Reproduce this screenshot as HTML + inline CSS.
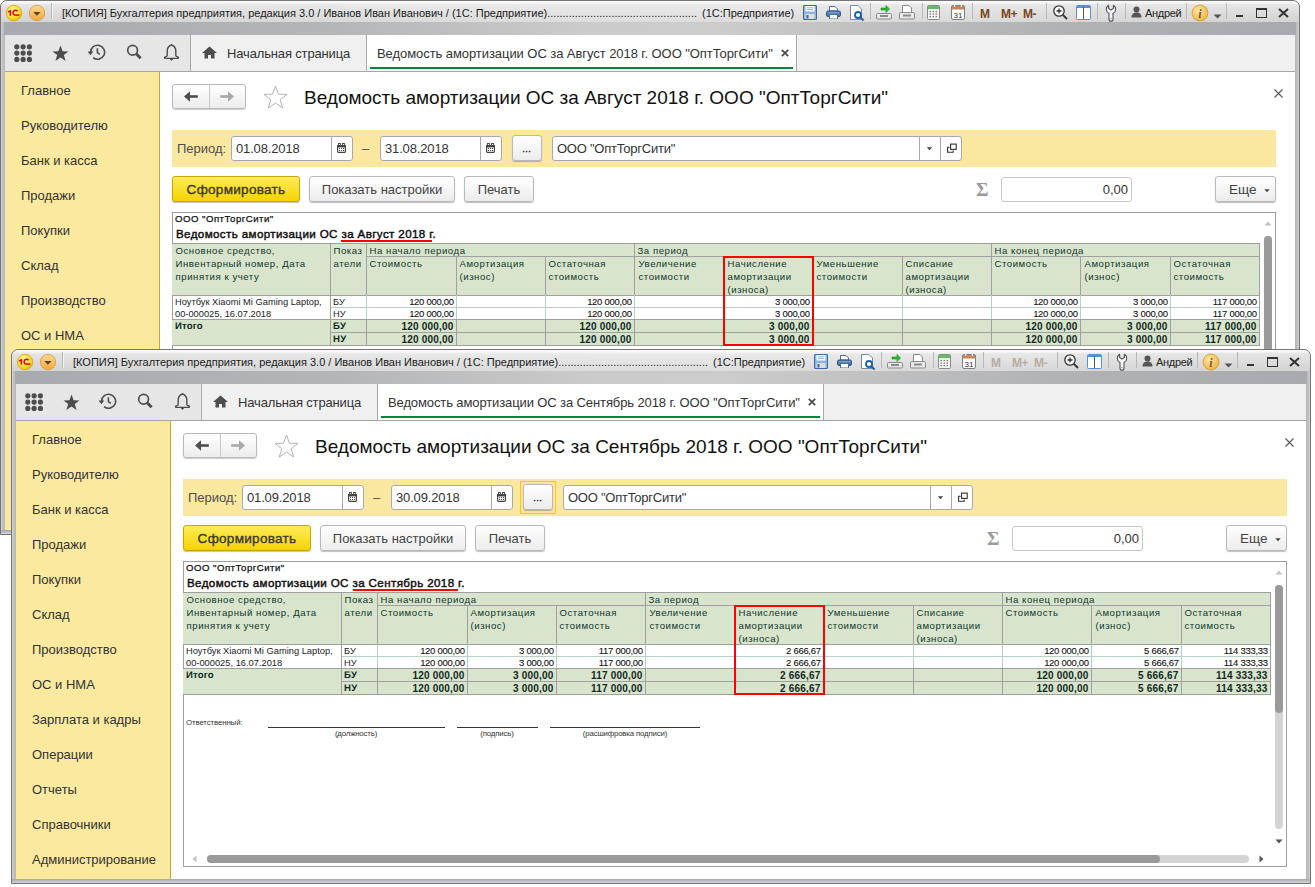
<!DOCTYPE html>
<html><head><meta charset="utf-8"><title>1C</title>
<style>
html,body{margin:0;padding:0;background:#fff;}
body{width:1315px;height:887px;overflow:hidden;position:relative;font-family:"Liberation Sans", sans-serif;}
div{font-family:"Liberation Sans", sans-serif;}
</style></head><body>
<div style="position:absolute;left:0px;top:0px;width:1300px;height:535px;overflow:hidden"><div style="position:absolute;left:0px;top:0px;width:1300px;height:535px;background:#b8b9bc;border:1px solid #767676;box-sizing:border-box;border-radius:7px 7px 0 0"></div><div style="position:absolute;left:1px;top:1px;width:1298px;height:21px;border-radius:6px 6px 0 0;background:linear-gradient(#fbfbfb 0px,#f4f4f4 2px,#e4e4e4 4px,#d3d3d3 21px)"></div><div style="position:absolute;left:1px;top:1px;width:1298px;height:21px;border-radius:6px 6px 0 0;background:linear-gradient(90deg,rgba(255,255,255,0) 0%,rgba(255,255,255,0.22) 45%,rgba(255,255,255,0.22) 55%,rgba(255,255,255,0) 100%)"></div><div style="position:absolute;left:1px;top:22px;width:1298px;height:13px;background:linear-gradient(90deg,#a9aaad 0%,#b4b5b7 25%,#cbcbcb 45%,#cccccc 55%,#b2b3b5 80%,#a9aaad 100%)"></div><div style="position:absolute;left:1px;top:22px;width:3px;height:512px;background:linear-gradient(90deg,#cfd0d2,#b8b9bc)"></div><div style="position:absolute;left:1296px;top:22px;width:3px;height:512px;background:linear-gradient(90deg,#b8b9bc,#cdced0)"></div><div style="position:absolute;left:1px;top:530px;width:1298px;height:4px;background:linear-gradient(#a6a7ac,#c2c3c6 60%,#d4d5d7)"></div><div style="position:absolute;left:5px;top:35px;width:1290px;height:495px;background:#fff"></div><svg style="position:absolute;left:5px;top:3px" width="19" height="19" viewBox="0 0 19 19"><defs><radialGradient id="g1ca" cx="40%" cy="35%" r="70%"><stop offset="0" stop-color="#fff7a0"/><stop offset="0.6" stop-color="#ffe23a"/><stop offset="1" stop-color="#f0b800"/></radialGradient></defs><circle cx="9" cy="10" r="7.7" fill="url(#g1ca)" stroke="#d8a300" stroke-width="0.8"/><path d="M2.8 8.4 L5.2 6.9 H6.1 V12.8 H4.6 V8.9 L2.8 9.8 Z" fill="#e80000"/><path d="M12.5 8.2 A2.5 2.5 0 1 0 9.6 12.1" fill="none" stroke="#e80000" stroke-width="1.5"/><path d="M9.4 12.1 H14.4" stroke="#e80000" stroke-width="1.5"/></svg><svg style="position:absolute;left:28px;top:3px" width="19" height="19" viewBox="0 0 19 19"><defs><linearGradient id="gdda" x1="0" y1="0" x2="0" y2="1"><stop offset="0" stop-color="#ffd890"/><stop offset="1" stop-color="#f6a83a"/></linearGradient></defs><circle cx="9" cy="10" r="7.7" fill="url(#gdda)" stroke="#c99a4a" stroke-width="0.8"/><path d="M5.2 9.1 L12.6 9.1 L8.9 12.8 Z" fill="#5a4322"/></svg><div style="position:absolute;left:51px;top:3px;width:1px;height:16px;background:#b4b4b4"></div><div style="position:absolute;left:52px;top:3px;width:1px;height:16px;background:#f4f4f4"></div><div style="position:absolute;left:62px;top:5px;white-space:nowrap;font-size:11px;line-height:16px;color:#1a1a1a;font-weight:normal;">[КОПИЯ] Бухгалтерия предприятия, редакция 3.0 / Иванов Иван Иванович / (1С: Предприятие).................................................</div><div style="position:absolute;left:702px;top:5px;white-space:nowrap;font-size:11px;line-height:16px;color:#1a1a1a;font-weight:normal;">(1С:Предприятие)</div><svg style="position:absolute;left:803px;top:5px" width="14" height="15" viewBox="0 0 14 15"><rect x="0.5" y="0.5" width="13" height="14" rx="0.5" fill="#8fb4e4" stroke="#3f6aa8"/><rect x="2.5" y="1" width="9" height="5.5" fill="#fff"/><path d="M4 2.8 H10 M4 4.6 H10" stroke="#7a9cc8" stroke-width="0.8"/><rect x="2.5" y="9" width="9" height="5" fill="#d8e0d8"/><rect x="3.5" y="10" width="2" height="3.5" fill="#3f6aa8"/></svg><svg style="position:absolute;left:826px;top:6px" width="15" height="13" viewBox="0 0 15 13"><path d="M3.5 0.5 H9 L11.5 3 V5 H3.5 Z" fill="#fff" stroke="#4a6a90"/><rect x="0.5" y="5" width="14" height="5.5" rx="1.5" fill="#4f7bb0" stroke="#34588a"/><path d="M2 6.8 H13" stroke="#9ab8dc" stroke-width="0.8"/><rect x="3.5" y="8.5" width="8" height="4.5" fill="#fff" stroke="#4a6a90"/></svg><svg style="position:absolute;left:850px;top:5px" width="15" height="16" viewBox="0 0 15 16"><path d="M0.5 0.5 H8 L11.5 4 V14.5 H0.5 Z" fill="#fff" stroke="#7a8aa0"/><circle cx="8" cy="10" r="3" fill="none" stroke="#1b5fa8" stroke-width="1.8"/><path d="M10 12 L13.5 15.5" stroke="#1b5fa8" stroke-width="2"/></svg><div style="position:absolute;left:870px;top:3px;width:1px;height:16px;background:#b8b8b8"></div><svg style="position:absolute;left:876px;top:5px" width="16" height="15" viewBox="0 0 16 15"><path d="M5 3 H10 V0.5 L13.5 4 L10 7.5 V5 H5 Z" fill="#2db82d" stroke="#1a8a1a" stroke-width="0.6"/><rect x="0.5" y="8.5" width="15" height="5.5" rx="1" fill="#e8e8e8" stroke="#8a8a8a"/><rect x="4" y="10" width="8" height="2" fill="#8a8a8a"/></svg><svg style="position:absolute;left:899px;top:5px" width="16" height="15" viewBox="0 0 16 15"><path d="M3.5 0.5 H10 L12.5 3 V8 H3.5 Z" fill="#fff" stroke="#8a8a8a"/><rect x="0.5" y="7.5" width="15" height="6.5" rx="1" fill="#e8e8e8" stroke="#8a8a8a"/><rect x="4" y="9.5" width="8" height="2" fill="#8a8a8a"/></svg><div style="position:absolute;left:922px;top:3px;width:1px;height:16px;background:#b8b8b8"></div><svg style="position:absolute;left:927px;top:5px" width="13" height="15" viewBox="0 0 13 15"><rect x="0.5" y="0.5" width="12" height="14" rx="1" fill="#f4f4f4" stroke="#8a8a8a"/><rect x="1" y="1" width="11" height="3" fill="#5fbf5f"/><g fill="#7a7a7a"><rect x="2.5" y="6" width="1.5" height="1.2"/><rect x="5.5" y="6" width="1.5" height="1.2"/><rect x="8.5" y="6" width="1.5" height="1.2"/><rect x="2.5" y="8.5" width="1.5" height="1.2"/><rect x="5.5" y="8.5" width="1.5" height="1.2"/><rect x="8.5" y="8.5" width="1.5" height="1.2" fill="#d33"/><rect x="2.5" y="11" width="1.5" height="1.2"/><rect x="5.5" y="11" width="1.5" height="1.2"/><rect x="8.5" y="11" width="1.5" height="1.2"/></g></svg><svg style="position:absolute;left:951px;top:4px" width="14" height="16" viewBox="0 0 14 16"><rect x="0.5" y="1.5" width="13" height="14" rx="1.5" fill="#fbfbfb" stroke="#7a8088"/><rect x="1" y="2" width="12" height="3.5" fill="#c8865a"/><rect x="3" y="1" width="1.2" height="2" fill="#fff"/><rect x="9.8" y="1" width="1.2" height="2" fill="#fff"/><text x="7" y="13.8" font-family="Liberation Sans" font-size="8" fill="#333" text-anchor="middle">31</text></svg><div style="position:absolute;left:972px;top:3px;width:1px;height:16px;background:#b8b8b8"></div><div style="position:absolute;left:980px;top:6px;white-space:nowrap;font-size:12px;line-height:16px;color:#7a4518;font-weight:bold;letter-spacing:0">M</div><div style="position:absolute;left:1001px;top:6px;white-space:nowrap;font-size:12px;line-height:16px;color:#7a4518;font-weight:bold;letter-spacing:-0.5px">M+</div><div style="position:absolute;left:1023px;top:6px;white-space:nowrap;font-size:12px;line-height:16px;color:#7a4518;font-weight:bold;letter-spacing:-0.5px">M-</div><div style="position:absolute;left:1046px;top:3px;width:1px;height:16px;background:#b8b8b8"></div><svg style="position:absolute;left:1053px;top:5px" width="15" height="15" viewBox="0 0 15 15"><circle cx="6" cy="6" r="5.2" fill="#fff" stroke="#333" stroke-width="1.3"/><path d="M3.5 6 H8.5 M6 3.5 V8.5" stroke="#333" stroke-width="1.3"/><path d="M10 10 L14 14" stroke="#333" stroke-width="1.8"/></svg><svg style="position:absolute;left:1076px;top:5px" width="15" height="15" viewBox="0 0 15 15"><rect x="0.5" y="0.5" width="14" height="14" rx="1" fill="#fff" stroke="#5b8fd0"/><rect x="1" y="1" width="13" height="2" fill="#5b8fd0"/><path d="M7.5 2 V14" stroke="#555" stroke-width="1"/></svg><div style="position:absolute;left:1097px;top:3px;width:1px;height:16px;background:#b8b8b8"></div><svg style="position:absolute;left:1105px;top:4px" width="12" height="18" viewBox="0 0 12 18"><path d="M3.6 1.2 V4.6 L6 6 L8.4 4.6 V1.2 A4.8 4.8 0 0 1 8 9.6 V15.2 A2 2 0 0 1 4 15.2 V9.6 A4.8 4.8 0 0 1 3.6 1.2 Z" fill="#f6f6f6" stroke="#50545a" stroke-width="1.1" stroke-linejoin="round"/><circle cx="6" cy="14.6" r="0.9" fill="#b0b0b0"/></svg><div style="position:absolute;left:1125px;top:3px;width:1px;height:16px;background:#b8b8b8"></div><svg style="position:absolute;left:1131px;top:6px" width="11" height="12" viewBox="0 0 11 12"><circle cx="5.5" cy="3.5" r="3" fill="#555"/><path d="M0.5 11.5 Q0.5 6.5 5.5 6.5 Q10.5 6.5 10.5 11.5 Z" fill="#555"/></svg><div style="position:absolute;left:1145px;top:6px;white-space:nowrap;font-size:11px;line-height:14px;color:#222;font-weight:normal;letter-spacing:-0.3px">Андрей</div><div style="position:absolute;left:1186px;top:3px;width:1px;height:16px;background:#b8b8b8"></div><svg style="position:absolute;left:1191px;top:4px" width="18" height="18" viewBox="0 0 18 18"><defs><radialGradient id="gina" cx="40%" cy="35%" r="70%"><stop offset="0" stop-color="#ffe6a0"/><stop offset="1" stop-color="#f0b040"/></radialGradient></defs><circle cx="9" cy="9" r="8" fill="url(#gina)" stroke="#d09a30" stroke-width="0.8"/><text x="9" y="13.5" font-family="Liberation Serif" font-style="italic" font-weight="bold" font-size="12" fill="#6a5a40" text-anchor="middle">i</text></svg><svg style="position:absolute;left:1213px;top:14px" width="9" height="5" viewBox="0 0 9 5"><path d="M0.5 0.5 H8.5 L4.5 4.5 Z" fill="#555"/></svg><div style="position:absolute;left:1226px;top:3px;width:1px;height:16px;background:#b8b8b8"></div><div style="position:absolute;left:1236px;top:15px;width:7px;height:2px;background:#333"></div><div style="position:absolute;left:1256px;top:8px;width:11px;height:10px;border:1.5px solid #333;box-sizing:border-box;border-top-width:2px"></div><svg style="position:absolute;left:1278px;top:8px" width="11" height="10" viewBox="0 0 11 10"><path d="M1 1 L10 9 M10 1 L1 9" stroke="#333" stroke-width="2"/></svg><div style="position:absolute;left:5px;top:35px;width:185px;height:36px;background:#e6e6e6"></div><div style="position:absolute;left:190px;top:35px;width:1px;height:36px;background:#a8a8a8"></div><div style="position:absolute;left:191px;top:35px;width:175px;height:36px;background:#f0f0f0"></div><svg style="position:absolute;left:14px;top:44px" width="18" height="18" viewBox="0 0 18 18"><circle cx="2.8" cy="2.8" r="2.6" fill="#4d4d4d"/><circle cx="9.1" cy="2.8" r="2.6" fill="#4d4d4d"/><circle cx="15.4" cy="2.8" r="2.6" fill="#4d4d4d"/><circle cx="2.8" cy="9.1" r="2.6" fill="#4d4d4d"/><circle cx="9.1" cy="9.1" r="2.6" fill="#4d4d4d"/><circle cx="15.4" cy="9.1" r="2.6" fill="#4d4d4d"/><circle cx="2.8" cy="15.4" r="2.6" fill="#4d4d4d"/><circle cx="9.1" cy="15.4" r="2.6" fill="#4d4d4d"/><circle cx="15.4" cy="15.4" r="2.6" fill="#4d4d4d"/></svg><svg style="position:absolute;left:52px;top:45px" width="17" height="17" viewBox="0 0 17 17"><path d="M8.5 0.5 L10.6 6.2 L16.5 6.4 L11.8 10 L13.6 16 L8.5 12.5 L3.4 16 L5.2 10 L0.5 6.4 L6.4 6.2 Z" fill="#4d4d4d"/></svg><svg style="position:absolute;left:87px;top:44px" width="19" height="17" viewBox="0 0 19 17"><path d="M3.6 8.2 A7 7 0 1 1 6.1 13.6" fill="none" stroke="#4d4d4d" stroke-width="1.6"/><path d="M0.6 7.4 L6.4 7.4 L3.4 11.2 Z" fill="#4d4d4d"/><path d="M10.4 4.2 V8.6 L12.8 10.4" fill="none" stroke="#4d4d4d" stroke-width="1.6"/></svg><svg style="position:absolute;left:126px;top:44px" width="17" height="17" viewBox="0 0 17 17"><circle cx="6.6" cy="6.2" r="4.9" fill="none" stroke="#4d4d4d" stroke-width="1.7"/><path d="M10.2 9.8 L14.6 14.2" stroke="#4d4d4d" stroke-width="3"/></svg><svg style="position:absolute;left:163px;top:44px" width="17" height="18" viewBox="0 0 17 18"><path d="M8.5 1 Q12.8 2.5 12.8 7 V11.5 Q12.8 12.5 15 13 Q16 14 14.8 14.4 H2.2 Q1 14 2 13 Q4.2 12.5 4.2 11.5 V7 Q4.2 2.5 8.5 1 Z" fill="none" stroke="#4d4d4d" stroke-width="1.4" stroke-linejoin="round"/><path d="M6.5 14.8 L8.5 17 L10.5 14.8 Z" fill="#4d4d4d"/><path d="M7.2 1.6 L8.5 0 L9.8 1.6 Z" fill="#4d4d4d"/></svg><svg style="position:absolute;left:202px;top:46px" width="15" height="13" viewBox="0 0 15 13"><path d="M7.5 0.5 L15 7 H12.5 V12.5 H9 V9 H6 V12.5 H2.5 V7 H0 Z" fill="#4d4d4d"/></svg><div style="position:absolute;left:227px;top:45px;white-space:nowrap;font-size:13px;line-height:17px;color:#333;font-weight:normal;letter-spacing:-0.15px">Начальная страница</div><div style="position:absolute;left:366px;top:35px;width:1px;height:36px;background:#a8a8a8"></div><div style="position:absolute;left:367px;top:35px;width:429px;height:36px;background:#fff"></div><div style="position:absolute;left:377px;top:45px;white-space:nowrap;font-size:13px;line-height:17px;color:#333;font-weight:normal;letter-spacing:-0.065px">Ведомость амортизации ОС за Август 2018 г. ООО "ОптТоргСити"</div><svg style="position:absolute;left:781px;top:49px" width="8" height="8" viewBox="0 0 8 8"><path d="M0.8 0.8 L7.2 7.2 M7.2 0.8 L0.8 7.2" stroke="#4a4a4a" stroke-width="1.7"/></svg><div style="position:absolute;left:370px;top:67px;width:423px;height:2px;background:#00893a"></div><div style="position:absolute;left:796px;top:35px;width:1px;height:36px;background:#a8a8a8"></div><div style="position:absolute;left:797px;top:35px;width:498px;height:36px;background:#f0f0f0"></div><div style="position:absolute;left:5px;top:71px;width:1290px;height:1px;background:#a6a6a6"></div><div style="position:absolute;left:5px;top:72px;width:154px;height:458px;background:#fbe9a0"></div><div style="position:absolute;left:159px;top:72px;width:1px;height:458px;background:#c8aa30"></div><div style="position:absolute;left:21px;top:82px;white-space:nowrap;font-size:13px;line-height:17px;color:#333;font-weight:normal;">Главное</div><div style="position:absolute;left:21px;top:117px;white-space:nowrap;font-size:13px;line-height:17px;color:#333;font-weight:normal;">Руководителю</div><div style="position:absolute;left:21px;top:152px;white-space:nowrap;font-size:13px;line-height:17px;color:#333;font-weight:normal;">Банк и касса</div><div style="position:absolute;left:21px;top:187px;white-space:nowrap;font-size:13px;line-height:17px;color:#333;font-weight:normal;">Продажи</div><div style="position:absolute;left:21px;top:222px;white-space:nowrap;font-size:13px;line-height:17px;color:#333;font-weight:normal;">Покупки</div><div style="position:absolute;left:21px;top:257px;white-space:nowrap;font-size:13px;line-height:17px;color:#333;font-weight:normal;">Склад</div><div style="position:absolute;left:21px;top:292px;white-space:nowrap;font-size:13px;line-height:17px;color:#333;font-weight:normal;">Производство</div><div style="position:absolute;left:21px;top:327px;white-space:nowrap;font-size:13px;line-height:17px;color:#333;font-weight:normal;">ОС и НМА</div><div style="position:absolute;left:21px;top:362px;white-space:nowrap;font-size:13px;line-height:17px;color:#333;font-weight:normal;">Зарплата и кадры</div><div style="position:absolute;left:21px;top:397px;white-space:nowrap;font-size:13px;line-height:17px;color:#333;font-weight:normal;">Операции</div><div style="position:absolute;left:21px;top:432px;white-space:nowrap;font-size:13px;line-height:17px;color:#333;font-weight:normal;">Отчеты</div><div style="position:absolute;left:21px;top:467px;white-space:nowrap;font-size:13px;line-height:17px;color:#333;font-weight:normal;">Справочники</div><div style="position:absolute;left:21px;top:502px;white-space:nowrap;font-size:13px;line-height:17px;color:#333;font-weight:normal;">Администрирование</div><div style="position:absolute;left:172px;top:84px;width:74px;height:25px;background:linear-gradient(#fff,#ececec);border:1px solid #b9b9b9;border-radius:3px;box-sizing:border-box;box-shadow:0 1px 1px rgba(0,0,0,0.2)"></div><div style="position:absolute;left:209px;top:85px;width:1px;height:23px;background:#c8c8c8"></div><svg style="position:absolute;left:183px;top:91px" width="16" height="11" viewBox="0 0 16 11"><path d="M1 5.5 L7 0.3 V10.7 Z" fill="#4d4d4d"/><rect x="6" y="4.2" width="8.8" height="2.6" fill="#4d4d4d"/></svg><svg style="position:absolute;left:219px;top:91px" width="16" height="11" viewBox="0 0 16 11"><path d="M15 5.5 L9 0.3 V10.7 Z" fill="#a8a8a8"/><rect x="1.2" y="4.2" width="8.8" height="2.6" fill="#a8a8a8"/></svg><svg style="position:absolute;left:263px;top:85px" width="25" height="24" viewBox="0 0 25 24"><path d="M12.5 1 L15.4 9.2 L24 9.4 L17.2 14.7 L19.7 23 L12.5 18.1 L5.3 23 L7.8 14.7 L1 9.4 L9.6 9.2 Z" fill="none" stroke="#b4b4b4" stroke-width="1"/></svg><div style="position:absolute;left:304px;top:86px;white-space:nowrap;font-size:19px;line-height:23px;color:#111;font-weight:normal;">Ведомость амортизации ОС за Август 2018 г. ООО "ОптТоргСити"</div><svg style="position:absolute;left:1274px;top:89px" width="9" height="9" viewBox="0 0 9 9"><path d="M0.5 0.5 L8.5 8.5 M8.5 0.5 L0.5 8.5" stroke="#555" stroke-width="1.1"/></svg><div style="position:absolute;left:172px;top:130px;width:1104px;height:37px;background:#fbe8a0"></div><div style="position:absolute;left:177px;top:140px;white-space:nowrap;font-size:13px;line-height:17px;color:#4d4d4d;font-weight:normal;">Период:</div><div style="position:absolute;left:231px;top:136px;width:122px;height:25px;background:#fff;border:1px solid #a9a9a9;border-radius:3px;box-sizing:border-box;"></div><div style="position:absolute;left:331px;top:137px;width:1px;height:23px;background:#a9a9a9"></div><div style="position:absolute;left:236px;top:140px;white-space:nowrap;font-size:13px;line-height:17px;color:#333;font-weight:normal;letter-spacing:-0.15px">01.08.2018</div><svg style="position:absolute;left:337px;top:143px" width="9" height="10" viewBox="0 0 9 10"><rect x="0.6" y="2.6" width="7.8" height="6.8" rx="0.8" fill="#fff" stroke="#444" stroke-width="1.2"/><rect x="0" y="2" width="9" height="2.4" fill="#444"/><rect x="1.5" y="0.5" width="2" height="2" fill="#fff" stroke="#444" stroke-width="0.9"/><rect x="5.5" y="0.5" width="2" height="2" fill="#fff" stroke="#444" stroke-width="0.9"/><rect x="2" y="5" width="1" height="1" fill="#444"/><rect x="4" y="5" width="1" height="1" fill="#444"/><rect x="6" y="5" width="1" height="1" fill="#444"/><rect x="2" y="7" width="1" height="1" fill="#444"/><rect x="4" y="7" width="1" height="1" fill="#444"/><rect x="6" y="7" width="1" height="1" fill="#444"/></svg><div style="position:absolute;left:380px;top:136px;width:122px;height:25px;background:#fff;border:1px solid #a9a9a9;border-radius:3px;box-sizing:border-box;"></div><div style="position:absolute;left:480px;top:137px;width:1px;height:23px;background:#a9a9a9"></div><div style="position:absolute;left:385px;top:140px;white-space:nowrap;font-size:13px;line-height:17px;color:#333;font-weight:normal;letter-spacing:-0.15px">31.08.2018</div><svg style="position:absolute;left:486px;top:143px" width="9" height="10" viewBox="0 0 9 10"><rect x="0.6" y="2.6" width="7.8" height="6.8" rx="0.8" fill="#fff" stroke="#444" stroke-width="1.2"/><rect x="0" y="2" width="9" height="2.4" fill="#444"/><rect x="1.5" y="0.5" width="2" height="2" fill="#fff" stroke="#444" stroke-width="0.9"/><rect x="5.5" y="0.5" width="2" height="2" fill="#fff" stroke="#444" stroke-width="0.9"/><rect x="2" y="5" width="1" height="1" fill="#444"/><rect x="4" y="5" width="1" height="1" fill="#444"/><rect x="6" y="5" width="1" height="1" fill="#444"/><rect x="2" y="7" width="1" height="1" fill="#444"/><rect x="4" y="7" width="1" height="1" fill="#444"/><rect x="6" y="7" width="1" height="1" fill="#444"/></svg><div style="position:absolute;left:362px;top:140px;white-space:nowrap;font-size:13px;line-height:17px;color:#555;font-weight:normal;">–</div><div style="position:absolute;left:512px;top:135px;width:30px;height:26px;background:linear-gradient(#ffffff,#ececec);border:1px solid #b9b9b9;border-radius:3px;box-sizing:border-box;box-shadow:0 1px 1px rgba(0,0,0,0.25);text-align:center;font-size:13px;line-height:25px;color:#333;font-weight:normal;white-space:nowrap;"></div><svg style="position:absolute;left:521px;top:149px" width="12" height="5" viewBox="0 0 12 5"><circle cx="2.6" cy="2.5" r="0.85" fill="#333"/><circle cx="5.6" cy="2.5" r="0.85" fill="#333"/><circle cx="8.6" cy="2.5" r="0.85" fill="#333"/></svg><div style="position:absolute;left:552px;top:136px;width:410px;height:25px;background:#fff;border:1px solid #a9a9a9;border-radius:3px;box-sizing:border-box;"></div><div style="position:absolute;left:557px;top:140px;white-space:nowrap;font-size:13px;line-height:17px;color:#333;font-weight:normal;letter-spacing:-0.25px">ООО "ОптТоргСити"</div><div style="position:absolute;left:919px;top:137px;width:1px;height:23px;background:#a9a9a9"></div><div style="position:absolute;left:940px;top:137px;width:1px;height:23px;background:#a9a9a9"></div><svg style="position:absolute;left:926px;top:147px" width="7" height="4" viewBox="0 0 7 4"><path d="M0.8 0.3 H6.2 L3.5 3.2 Z" fill="#444"/></svg><svg style="position:absolute;left:947px;top:143px" width="11" height="10" viewBox="0 0 11 10"><rect x="3.6" y="1.1" width="5.6" height="5.3" fill="none" stroke="#333" stroke-width="1.1"/><path d="M2.6 4.2 H0.6 V9.2 H6.2 V7.4" fill="none" stroke="#333" stroke-width="1.1"/></svg><div style="position:absolute;left:172px;top:176px;width:128px;height:26px;background:linear-gradient(#ffec5a,#f6d300);border:1px solid #c8a800;border-radius:3px;box-sizing:border-box;box-shadow:0 1px 1px rgba(0,0,0,0.25);text-align:center;font-size:13.5px;line-height:25px;color:#3c3a30;font-weight:normal;white-space:nowrap;letter-spacing:0.3px;-webkit-text-stroke:0.4px #3c3a30">Сформировать</div><div style="position:absolute;left:309px;top:176px;width:146px;height:26px;background:linear-gradient(#ffffff,#ececec);border:1px solid #b9b9b9;border-radius:3px;box-sizing:border-box;box-shadow:0 1px 1px rgba(0,0,0,0.25);text-align:center;font-size:13px;line-height:25px;color:#333;font-weight:normal;white-space:nowrap;color:#444">Показать настройки</div><div style="position:absolute;left:464px;top:176px;width:70px;height:26px;background:linear-gradient(#ffffff,#ececec);border:1px solid #b9b9b9;border-radius:3px;box-sizing:border-box;box-shadow:0 1px 1px rgba(0,0,0,0.25);text-align:center;font-size:13px;line-height:25px;color:#333;font-weight:normal;white-space:nowrap;color:#444">Печать</div><div style="position:absolute;left:976px;top:180px;white-space:nowrap;font-size:19px;line-height:20px;color:#9a9a9a;font-weight:bold;font-family:'Liberation Serif',serif">Σ</div><div style="position:absolute;left:1001px;top:177px;width:131px;height:25px;background:#fff;border:1px solid #a9a9a9;border-radius:3px;box-sizing:border-box;border-color:#c8c8c8"></div><div style="position:absolute;left:828px;width:300px;top:181px;text-align:right;white-space:nowrap;font-size:13px;line-height:17px;color:#333;font-weight:normal;">0,00</div><div style="position:absolute;left:1215px;top:176px;width:61px;height:26px;background:linear-gradient(#ffffff,#ececec);border:1px solid #b9b9b9;border-radius:3px;box-sizing:border-box;box-shadow:0 1px 1px rgba(0,0,0,0.25);text-align:center;font-size:13px;line-height:25px;color:#333;font-weight:normal;white-space:nowrap;text-align:left;padding-left:13px;color:#444;font-size:13.5px">Еще</div><svg style="position:absolute;left:1264px;top:189px" width="6" height="4" viewBox="0 0 6 4"><path d="M0.3 0.2 H5.7 L3 3.2 Z" fill="#444"/></svg><div style="position:absolute;left:172px;top:212px;width:1104px;height:306px;background:#fff;border:1px solid #a0a0a0;box-sizing:border-box"></div><div style="position:absolute;left:175px;top:212.5px;white-space:nowrap;font-size:9.6px;line-height:12.5px;color:#111;font-weight:normal;letter-spacing:0.5px;-webkit-text-stroke:0.25px #111">ООО "ОптТоргСити"</div><div style="position:absolute;left:176px;top:226px;white-space:nowrap;font-size:11.6px;line-height:15px;color:#111;font-weight:normal;letter-spacing:0.38px;-webkit-text-stroke:0.45px #111">Ведомость амортизации ОС за Август 2018 г.</div><div style="position:absolute;left:341px;top:240px;width:91px;height:2px;background:#ff0000"></div><div style="position:absolute;left:172px;top:243px;width:1087px;height:52px;background:#d9e4cc"></div><div style="position:absolute;left:172px;top:319px;width:1087px;height:26px;background:#d9e4cc"></div><div style="position:absolute;left:172px;top:243px;width:1088px;height:1px;background:#a0a0a0"></div><div style="position:absolute;left:366px;top:256px;width:893px;height:1px;background:#a0a0a0"></div><div style="position:absolute;left:172px;top:295px;width:1088px;height:1px;background:#a0a0a0"></div><div style="position:absolute;left:330px;top:307px;width:929px;height:1px;background:#b7d1c6"></div><div style="position:absolute;left:172px;top:319px;width:1088px;height:1px;background:#a0a0a0"></div><div style="position:absolute;left:330px;top:332px;width:929px;height:1px;background:#a0a0a0"></div><div style="position:absolute;left:172px;top:345px;width:1088px;height:1px;background:#a0a0a0"></div><div style="position:absolute;left:330px;top:243px;width:1px;height:52px;background:#a0a0a0"></div><div style="position:absolute;left:330px;top:295px;width:1px;height:24px;background:#a0a0a0"></div><div style="position:absolute;left:330px;top:319px;width:1px;height:26px;background:#a0a0a0"></div><div style="position:absolute;left:366px;top:243px;width:1px;height:52px;background:#a0a0a0"></div><div style="position:absolute;left:366px;top:295px;width:1px;height:24px;background:#b7d1c6"></div><div style="position:absolute;left:366px;top:319px;width:1px;height:26px;background:#a0a0a0"></div><div style="position:absolute;left:456px;top:256px;width:1px;height:39px;background:#a0a0a0"></div><div style="position:absolute;left:456px;top:295px;width:1px;height:24px;background:#b7d1c6"></div><div style="position:absolute;left:456px;top:319px;width:1px;height:26px;background:#a0a0a0"></div><div style="position:absolute;left:545px;top:256px;width:1px;height:39px;background:#a0a0a0"></div><div style="position:absolute;left:545px;top:295px;width:1px;height:24px;background:#b7d1c6"></div><div style="position:absolute;left:545px;top:319px;width:1px;height:26px;background:#a0a0a0"></div><div style="position:absolute;left:634px;top:243px;width:1px;height:52px;background:#a0a0a0"></div><div style="position:absolute;left:634px;top:295px;width:1px;height:24px;background:#b7d1c6"></div><div style="position:absolute;left:634px;top:319px;width:1px;height:26px;background:#a0a0a0"></div><div style="position:absolute;left:723px;top:256px;width:1px;height:39px;background:#a0a0a0"></div><div style="position:absolute;left:723px;top:295px;width:1px;height:24px;background:#b7d1c6"></div><div style="position:absolute;left:723px;top:319px;width:1px;height:26px;background:#a0a0a0"></div><div style="position:absolute;left:812px;top:256px;width:1px;height:39px;background:#a0a0a0"></div><div style="position:absolute;left:812px;top:295px;width:1px;height:24px;background:#b7d1c6"></div><div style="position:absolute;left:812px;top:319px;width:1px;height:26px;background:#a0a0a0"></div><div style="position:absolute;left:902px;top:256px;width:1px;height:39px;background:#a0a0a0"></div><div style="position:absolute;left:902px;top:295px;width:1px;height:24px;background:#b7d1c6"></div><div style="position:absolute;left:902px;top:319px;width:1px;height:26px;background:#a0a0a0"></div><div style="position:absolute;left:991px;top:243px;width:1px;height:52px;background:#a0a0a0"></div><div style="position:absolute;left:991px;top:295px;width:1px;height:24px;background:#b7d1c6"></div><div style="position:absolute;left:991px;top:319px;width:1px;height:26px;background:#a0a0a0"></div><div style="position:absolute;left:1080px;top:256px;width:1px;height:39px;background:#a0a0a0"></div><div style="position:absolute;left:1080px;top:295px;width:1px;height:24px;background:#b7d1c6"></div><div style="position:absolute;left:1080px;top:319px;width:1px;height:26px;background:#a0a0a0"></div><div style="position:absolute;left:1170px;top:256px;width:1px;height:39px;background:#a0a0a0"></div><div style="position:absolute;left:1170px;top:295px;width:1px;height:24px;background:#b7d1c6"></div><div style="position:absolute;left:1170px;top:319px;width:1px;height:26px;background:#a0a0a0"></div><div style="position:absolute;left:1259px;top:243px;width:1px;height:52px;background:#a0a0a0"></div><div style="position:absolute;left:1259px;top:295px;width:1px;height:24px;background:#a0a0a0"></div><div style="position:absolute;left:1259px;top:319px;width:1px;height:26px;background:#a0a0a0"></div><div style="position:absolute;left:175.5px;top:244px;white-space:nowrap;font-size:9.6px;line-height:13px;color:#0e362c;font-weight:normal;letter-spacing:0.55px">Основное средство,</div><div style="position:absolute;left:175.5px;top:257px;white-space:nowrap;font-size:9.6px;line-height:13px;color:#0e362c;font-weight:normal;letter-spacing:0.55px">Инвентарный номер, Дата</div><div style="position:absolute;left:175.5px;top:270px;white-space:nowrap;font-size:9.6px;line-height:13px;color:#0e362c;font-weight:normal;letter-spacing:0.55px">принятия к учету</div><div style="position:absolute;left:333.5px;top:244px;white-space:nowrap;font-size:9.6px;line-height:13px;color:#0e362c;font-weight:normal;letter-spacing:0.55px">Показ</div><div style="position:absolute;left:333.5px;top:257px;white-space:nowrap;font-size:9.6px;line-height:13px;color:#0e362c;font-weight:normal;letter-spacing:0.55px">атели</div><div style="position:absolute;left:369.5px;top:244px;white-space:nowrap;font-size:9.6px;line-height:13px;color:#0e362c;font-weight:normal;letter-spacing:0.55px">На начало периода</div><div style="position:absolute;left:637.5px;top:244px;white-space:nowrap;font-size:9.6px;line-height:13px;color:#0e362c;font-weight:normal;letter-spacing:0.55px">За период</div><div style="position:absolute;left:994.5px;top:244px;white-space:nowrap;font-size:9.6px;line-height:13px;color:#0e362c;font-weight:normal;letter-spacing:0.55px">На конец периода</div><div style="position:absolute;left:369.5px;top:257px;white-space:nowrap;font-size:9.6px;line-height:13px;color:#0e362c;font-weight:normal;letter-spacing:0.55px">Стоимость</div><div style="position:absolute;left:459.5px;top:257px;white-space:nowrap;font-size:9.6px;line-height:13px;color:#0e362c;font-weight:normal;letter-spacing:0.55px">Амортизация</div><div style="position:absolute;left:459.5px;top:270px;white-space:nowrap;font-size:9.6px;line-height:13px;color:#0e362c;font-weight:normal;letter-spacing:0.55px">(износ)</div><div style="position:absolute;left:548.5px;top:257px;white-space:nowrap;font-size:9.6px;line-height:13px;color:#0e362c;font-weight:normal;letter-spacing:0.55px">Остаточная</div><div style="position:absolute;left:548.5px;top:270px;white-space:nowrap;font-size:9.6px;line-height:13px;color:#0e362c;font-weight:normal;letter-spacing:0.55px">стоимость</div><div style="position:absolute;left:638.5px;top:257px;white-space:nowrap;font-size:9.6px;line-height:13px;color:#0e362c;font-weight:normal;letter-spacing:0.55px">Увеличение</div><div style="position:absolute;left:638.5px;top:270px;white-space:nowrap;font-size:9.6px;line-height:13px;color:#0e362c;font-weight:normal;letter-spacing:0.55px">стоимости</div><div style="position:absolute;left:727.5px;top:257px;white-space:nowrap;font-size:9.6px;line-height:13px;color:#0e362c;font-weight:normal;letter-spacing:0.55px">Начисление</div><div style="position:absolute;left:727.5px;top:270px;white-space:nowrap;font-size:9.6px;line-height:13px;color:#0e362c;font-weight:normal;letter-spacing:0.55px">амортизации</div><div style="position:absolute;left:727.5px;top:283px;white-space:nowrap;font-size:9.6px;line-height:13px;color:#0e362c;font-weight:normal;letter-spacing:0.55px">(износа)</div><div style="position:absolute;left:816.5px;top:257px;white-space:nowrap;font-size:9.6px;line-height:13px;color:#0e362c;font-weight:normal;letter-spacing:0.55px">Уменьшение</div><div style="position:absolute;left:816.5px;top:270px;white-space:nowrap;font-size:9.6px;line-height:13px;color:#0e362c;font-weight:normal;letter-spacing:0.55px">стоимости</div><div style="position:absolute;left:905.5px;top:257px;white-space:nowrap;font-size:9.6px;line-height:13px;color:#0e362c;font-weight:normal;letter-spacing:0.55px">Списание</div><div style="position:absolute;left:905.5px;top:270px;white-space:nowrap;font-size:9.6px;line-height:13px;color:#0e362c;font-weight:normal;letter-spacing:0.55px">амортизации</div><div style="position:absolute;left:905.5px;top:283px;white-space:nowrap;font-size:9.6px;line-height:13px;color:#0e362c;font-weight:normal;letter-spacing:0.55px">(износа)</div><div style="position:absolute;left:994.5px;top:257px;white-space:nowrap;font-size:9.6px;line-height:13px;color:#0e362c;font-weight:normal;letter-spacing:0.55px">Стоимость</div><div style="position:absolute;left:1084.5px;top:257px;white-space:nowrap;font-size:9.6px;line-height:13px;color:#0e362c;font-weight:normal;letter-spacing:0.55px">Амортизация</div><div style="position:absolute;left:1084.5px;top:270px;white-space:nowrap;font-size:9.6px;line-height:13px;color:#0e362c;font-weight:normal;letter-spacing:0.55px">(износ)</div><div style="position:absolute;left:1173.5px;top:257px;white-space:nowrap;font-size:9.6px;line-height:13px;color:#0e362c;font-weight:normal;letter-spacing:0.55px">Остаточная</div><div style="position:absolute;left:1173.5px;top:270px;white-space:nowrap;font-size:9.6px;line-height:13px;color:#0e362c;font-weight:normal;letter-spacing:0.55px">стоимость</div><div style="position:absolute;left:175px;top:296px;white-space:nowrap;font-size:9.3px;line-height:12px;color:#222;font-weight:normal;">Ноутбук Xiaomi Mi Gaming Laptop,</div><div style="position:absolute;left:175px;top:308px;white-space:nowrap;font-size:9.3px;line-height:12px;color:#222;font-weight:normal;">00-000025, 16.07.2018</div><div style="position:absolute;left:333px;top:296px;white-space:nowrap;font-size:9.3px;line-height:12px;color:#222;font-weight:normal;">БУ</div><div style="position:absolute;left:333px;top:308px;white-space:nowrap;font-size:9.3px;line-height:12px;color:#222;font-weight:normal;">НУ</div><div style="position:absolute;left:175px;top:320px;white-space:nowrap;font-size:9.6px;line-height:13px;color:#102a24;font-weight:bold;letter-spacing:0.15px;text-rendering:geometricPrecision">Итого</div><div style="position:absolute;left:333px;top:320px;white-space:nowrap;font-size:9.6px;line-height:13px;color:#102a24;font-weight:bold;letter-spacing:0.3px;text-rendering:geometricPrecision">БУ</div><div style="position:absolute;left:333px;top:333px;white-space:nowrap;font-size:9.6px;line-height:13px;color:#102a24;font-weight:bold;letter-spacing:0.3px;text-rendering:geometricPrecision">НУ</div><div style="position:absolute;left:153.7px;width:300px;top:296px;text-align:right;white-space:nowrap;font-size:9.5px;line-height:12px;color:#111;font-weight:normal;letter-spacing:-0.3px;-webkit-text-stroke:0.1px #111">120 000,00</div><div style="position:absolute;left:153.7px;width:300px;top:308px;text-align:right;white-space:nowrap;font-size:9.5px;line-height:12px;color:#111;font-weight:normal;letter-spacing:-0.3px;-webkit-text-stroke:0.1px #111">120 000,00</div><div style="position:absolute;left:153.5px;width:300px;top:320px;text-align:right;white-space:nowrap;font-size:10px;line-height:13px;color:#102a24;font-weight:bold;letter-spacing:0.2px">120 000,00</div><div style="position:absolute;left:153.5px;width:300px;top:333px;text-align:right;white-space:nowrap;font-size:10px;line-height:13px;color:#102a24;font-weight:bold;letter-spacing:0.2px">120 000,00</div><div style="position:absolute;left:331.70000000000005px;width:300px;top:296px;text-align:right;white-space:nowrap;font-size:9.5px;line-height:12px;color:#111;font-weight:normal;letter-spacing:-0.3px;-webkit-text-stroke:0.1px #111">120 000,00</div><div style="position:absolute;left:331.70000000000005px;width:300px;top:308px;text-align:right;white-space:nowrap;font-size:9.5px;line-height:12px;color:#111;font-weight:normal;letter-spacing:-0.3px;-webkit-text-stroke:0.1px #111">120 000,00</div><div style="position:absolute;left:331.5px;width:300px;top:320px;text-align:right;white-space:nowrap;font-size:10px;line-height:13px;color:#102a24;font-weight:bold;letter-spacing:0.2px">120 000,00</div><div style="position:absolute;left:331.5px;width:300px;top:333px;text-align:right;white-space:nowrap;font-size:10px;line-height:13px;color:#102a24;font-weight:bold;letter-spacing:0.2px">120 000,00</div><div style="position:absolute;left:509.70000000000005px;width:300px;top:296px;text-align:right;white-space:nowrap;font-size:9.5px;line-height:12px;color:#111;font-weight:normal;letter-spacing:-0.3px;-webkit-text-stroke:0.1px #111">3 000,00</div><div style="position:absolute;left:509.70000000000005px;width:300px;top:308px;text-align:right;white-space:nowrap;font-size:9.5px;line-height:12px;color:#111;font-weight:normal;letter-spacing:-0.3px;-webkit-text-stroke:0.1px #111">3 000,00</div><div style="position:absolute;left:509.5px;width:300px;top:320px;text-align:right;white-space:nowrap;font-size:10px;line-height:13px;color:#102a24;font-weight:bold;letter-spacing:0.2px">3 000,00</div><div style="position:absolute;left:509.5px;width:300px;top:333px;text-align:right;white-space:nowrap;font-size:10px;line-height:13px;color:#102a24;font-weight:bold;letter-spacing:0.2px">3 000,00</div><div style="position:absolute;left:777.7px;width:300px;top:296px;text-align:right;white-space:nowrap;font-size:9.5px;line-height:12px;color:#111;font-weight:normal;letter-spacing:-0.3px;-webkit-text-stroke:0.1px #111">120 000,00</div><div style="position:absolute;left:777.7px;width:300px;top:308px;text-align:right;white-space:nowrap;font-size:9.5px;line-height:12px;color:#111;font-weight:normal;letter-spacing:-0.3px;-webkit-text-stroke:0.1px #111">120 000,00</div><div style="position:absolute;left:777.5px;width:300px;top:320px;text-align:right;white-space:nowrap;font-size:10px;line-height:13px;color:#102a24;font-weight:bold;letter-spacing:0.2px">120 000,00</div><div style="position:absolute;left:777.5px;width:300px;top:333px;text-align:right;white-space:nowrap;font-size:10px;line-height:13px;color:#102a24;font-weight:bold;letter-spacing:0.2px">120 000,00</div><div style="position:absolute;left:867.7px;width:300px;top:296px;text-align:right;white-space:nowrap;font-size:9.5px;line-height:12px;color:#111;font-weight:normal;letter-spacing:-0.3px;-webkit-text-stroke:0.1px #111">3 000,00</div><div style="position:absolute;left:867.7px;width:300px;top:308px;text-align:right;white-space:nowrap;font-size:9.5px;line-height:12px;color:#111;font-weight:normal;letter-spacing:-0.3px;-webkit-text-stroke:0.1px #111">3 000,00</div><div style="position:absolute;left:867.5px;width:300px;top:320px;text-align:right;white-space:nowrap;font-size:10px;line-height:13px;color:#102a24;font-weight:bold;letter-spacing:0.2px">3 000,00</div><div style="position:absolute;left:867.5px;width:300px;top:333px;text-align:right;white-space:nowrap;font-size:10px;line-height:13px;color:#102a24;font-weight:bold;letter-spacing:0.2px">3 000,00</div><div style="position:absolute;left:956.7px;width:300px;top:296px;text-align:right;white-space:nowrap;font-size:9.5px;line-height:12px;color:#111;font-weight:normal;letter-spacing:-0.3px;-webkit-text-stroke:0.1px #111">117 000,00</div><div style="position:absolute;left:956.7px;width:300px;top:308px;text-align:right;white-space:nowrap;font-size:9.5px;line-height:12px;color:#111;font-weight:normal;letter-spacing:-0.3px;-webkit-text-stroke:0.1px #111">117 000,00</div><div style="position:absolute;left:956.5px;width:300px;top:320px;text-align:right;white-space:nowrap;font-size:10px;line-height:13px;color:#102a24;font-weight:bold;letter-spacing:0.2px">117 000,00</div><div style="position:absolute;left:956.5px;width:300px;top:333px;text-align:right;white-space:nowrap;font-size:10px;line-height:13px;color:#102a24;font-weight:bold;letter-spacing:0.2px">117 000,00</div><div style="position:absolute;left:723px;top:256px;width:91px;height:90px;border:2px solid #ff0000;box-sizing:border-box"></div><div style="position:absolute;left:175px;top:369px;white-space:nowrap;font-size:7.8px;line-height:10px;color:#333;font-weight:normal;letter-spacing:-0.1px">Ответственный:</div><div style="position:absolute;left:257px;top:378px;width:177px;height:1px;background:#333"></div><div style="position:absolute;left:446px;top:378px;width:81px;height:1px;background:#333"></div><div style="position:absolute;left:539px;top:378px;width:150px;height:1px;background:#333"></div><div style="position:absolute;left:145px;width:400px;top:380px;text-align:center;white-space:nowrap;font-size:7.8px;line-height:10px;color:#333;letter-spacing:-0.15px">(должность)</div><div style="position:absolute;left:286px;width:400px;top:380px;text-align:center;white-space:nowrap;font-size:7.8px;line-height:10px;color:#333;letter-spacing:-0.15px">(подпись)</div><div style="position:absolute;left:414px;width:400px;top:380px;text-align:center;white-space:nowrap;font-size:7.8px;line-height:10px;color:#333;letter-spacing:-0.15px">(расшифровка подписи)</div><svg style="position:absolute;left:1264px;top:221px" width="8" height="5" viewBox="0 0 8 5"><path d="M0.5 4.5 H7.5 L4 0.5 Z" fill="#c4c4c4"/></svg><div style="position:absolute;left:1264px;top:236px;width:8px;height:244px;background:#d4d4d4;border-radius:4px"></div><div style="position:absolute;left:1264px;top:236px;width:8px;height:128px;background:#9a9a9a;border-radius:4px"></div><svg style="position:absolute;left:1264px;top:490px" width="8" height="5" viewBox="0 0 8 5"><path d="M0.5 0.5 H7.5 L4 4.5 Z" fill="#555"/></svg><svg style="position:absolute;left:181px;top:506px" width="5" height="8" viewBox="0 0 5 8"><path d="M4.5 0.5 V7.5 L0.5 4 Z" fill="#c4c4c4"/></svg><div style="position:absolute;left:196px;top:506px;width:1042px;height:8px;background:#d4d4d4;border-radius:4px"></div><div style="position:absolute;left:196px;top:506px;width:953px;height:8px;background:#9a9a9a;border-radius:4px"></div><svg style="position:absolute;left:1248px;top:506px" width="5" height="8" viewBox="0 0 5 8"><path d="M0.5 0.5 V7.5 L4.5 4 Z" fill="#555"/></svg></div><div style="position:absolute;left:11px;top:349px;width:1300px;height:535px;overflow:hidden"><div style="position:absolute;left:0px;top:0px;width:1300px;height:535px;background:#b8b9bc;border:1px solid #767676;box-sizing:border-box;border-radius:7px 7px 0 0"></div><div style="position:absolute;left:1px;top:1px;width:1298px;height:21px;border-radius:6px 6px 0 0;background:linear-gradient(#fbfbfb 0px,#f4f4f4 2px,#e4e4e4 4px,#d3d3d3 21px)"></div><div style="position:absolute;left:1px;top:1px;width:1298px;height:21px;border-radius:6px 6px 0 0;background:linear-gradient(90deg,rgba(255,255,255,0) 0%,rgba(255,255,255,0.22) 45%,rgba(255,255,255,0.22) 55%,rgba(255,255,255,0) 100%)"></div><div style="position:absolute;left:1px;top:22px;width:1298px;height:13px;background:linear-gradient(90deg,#a9aaad 0%,#b4b5b7 25%,#cbcbcb 45%,#cccccc 55%,#b2b3b5 80%,#a9aaad 100%)"></div><div style="position:absolute;left:1px;top:22px;width:3px;height:512px;background:linear-gradient(90deg,#cfd0d2,#b8b9bc)"></div><div style="position:absolute;left:1296px;top:22px;width:3px;height:512px;background:linear-gradient(90deg,#b8b9bc,#cdced0)"></div><div style="position:absolute;left:1px;top:530px;width:1298px;height:4px;background:linear-gradient(#a6a7ac,#c2c3c6 60%,#d4d5d7)"></div><div style="position:absolute;left:5px;top:35px;width:1290px;height:495px;background:#fff"></div><svg style="position:absolute;left:5px;top:3px" width="19" height="19" viewBox="0 0 19 19"><defs><radialGradient id="g1cb" cx="40%" cy="35%" r="70%"><stop offset="0" stop-color="#fff7a0"/><stop offset="0.6" stop-color="#ffe23a"/><stop offset="1" stop-color="#f0b800"/></radialGradient></defs><circle cx="9" cy="10" r="7.7" fill="url(#g1cb)" stroke="#d8a300" stroke-width="0.8"/><path d="M2.8 8.4 L5.2 6.9 H6.1 V12.8 H4.6 V8.9 L2.8 9.8 Z" fill="#e80000"/><path d="M12.5 8.2 A2.5 2.5 0 1 0 9.6 12.1" fill="none" stroke="#e80000" stroke-width="1.5"/><path d="M9.4 12.1 H14.4" stroke="#e80000" stroke-width="1.5"/></svg><svg style="position:absolute;left:28px;top:3px" width="19" height="19" viewBox="0 0 19 19"><defs><linearGradient id="gddb" x1="0" y1="0" x2="0" y2="1"><stop offset="0" stop-color="#ffd890"/><stop offset="1" stop-color="#f6a83a"/></linearGradient></defs><circle cx="9" cy="10" r="7.7" fill="url(#gddb)" stroke="#c99a4a" stroke-width="0.8"/><path d="M5.2 9.1 L12.6 9.1 L8.9 12.8 Z" fill="#5a4322"/></svg><div style="position:absolute;left:51px;top:3px;width:1px;height:16px;background:#b4b4b4"></div><div style="position:absolute;left:52px;top:3px;width:1px;height:16px;background:#f4f4f4"></div><div style="position:absolute;left:62px;top:5px;white-space:nowrap;font-size:11px;line-height:16px;color:#1a1a1a;font-weight:normal;">[КОПИЯ] Бухгалтерия предприятия, редакция 3.0 / Иванов Иван Иванович / (1С: Предприятие).................................................</div><div style="position:absolute;left:702px;top:5px;white-space:nowrap;font-size:11px;line-height:16px;color:#1a1a1a;font-weight:normal;">(1С:Предприятие)</div><svg style="position:absolute;left:803px;top:5px" width="14" height="15" viewBox="0 0 14 15"><rect x="0.5" y="0.5" width="13" height="14" rx="0.5" fill="#8fb4e4" stroke="#3f6aa8"/><rect x="2.5" y="1" width="9" height="5.5" fill="#fff"/><path d="M4 2.8 H10 M4 4.6 H10" stroke="#7a9cc8" stroke-width="0.8"/><rect x="2.5" y="9" width="9" height="5" fill="#d8e0d8"/><rect x="3.5" y="10" width="2" height="3.5" fill="#3f6aa8"/></svg><svg style="position:absolute;left:826px;top:6px" width="15" height="13" viewBox="0 0 15 13"><path d="M3.5 0.5 H9 L11.5 3 V5 H3.5 Z" fill="#fff" stroke="#4a6a90"/><rect x="0.5" y="5" width="14" height="5.5" rx="1.5" fill="#4f7bb0" stroke="#34588a"/><path d="M2 6.8 H13" stroke="#9ab8dc" stroke-width="0.8"/><rect x="3.5" y="8.5" width="8" height="4.5" fill="#fff" stroke="#4a6a90"/></svg><svg style="position:absolute;left:850px;top:5px" width="15" height="16" viewBox="0 0 15 16"><path d="M0.5 0.5 H8 L11.5 4 V14.5 H0.5 Z" fill="#fff" stroke="#7a8aa0"/><circle cx="8" cy="10" r="3" fill="none" stroke="#1b5fa8" stroke-width="1.8"/><path d="M10 12 L13.5 15.5" stroke="#1b5fa8" stroke-width="2"/></svg><div style="position:absolute;left:870px;top:3px;width:1px;height:16px;background:#b8b8b8"></div><svg style="position:absolute;left:876px;top:5px" width="16" height="15" viewBox="0 0 16 15"><path d="M5 3 H10 V0.5 L13.5 4 L10 7.5 V5 H5 Z" fill="#2db82d" stroke="#1a8a1a" stroke-width="0.6"/><rect x="0.5" y="8.5" width="15" height="5.5" rx="1" fill="#e8e8e8" stroke="#8a8a8a"/><rect x="4" y="10" width="8" height="2" fill="#8a8a8a"/></svg><svg style="position:absolute;left:899px;top:5px" width="16" height="15" viewBox="0 0 16 15"><path d="M3.5 0.5 H10 L12.5 3 V8 H3.5 Z" fill="#fff" stroke="#8a8a8a"/><rect x="0.5" y="7.5" width="15" height="6.5" rx="1" fill="#e8e8e8" stroke="#8a8a8a"/><rect x="4" y="9.5" width="8" height="2" fill="#8a8a8a"/></svg><div style="position:absolute;left:922px;top:3px;width:1px;height:16px;background:#b8b8b8"></div><svg style="position:absolute;left:927px;top:5px" width="13" height="15" viewBox="0 0 13 15"><rect x="0.5" y="0.5" width="12" height="14" rx="1" fill="#f4f4f4" stroke="#8a8a8a"/><rect x="1" y="1" width="11" height="3" fill="#5fbf5f"/><g fill="#7a7a7a"><rect x="2.5" y="6" width="1.5" height="1.2"/><rect x="5.5" y="6" width="1.5" height="1.2"/><rect x="8.5" y="6" width="1.5" height="1.2"/><rect x="2.5" y="8.5" width="1.5" height="1.2"/><rect x="5.5" y="8.5" width="1.5" height="1.2"/><rect x="8.5" y="8.5" width="1.5" height="1.2" fill="#d33"/><rect x="2.5" y="11" width="1.5" height="1.2"/><rect x="5.5" y="11" width="1.5" height="1.2"/><rect x="8.5" y="11" width="1.5" height="1.2"/></g></svg><svg style="position:absolute;left:951px;top:4px" width="14" height="16" viewBox="0 0 14 16"><rect x="0.5" y="1.5" width="13" height="14" rx="1.5" fill="#fbfbfb" stroke="#7a8088"/><rect x="1" y="2" width="12" height="3.5" fill="#c8865a"/><rect x="3" y="1" width="1.2" height="2" fill="#fff"/><rect x="9.8" y="1" width="1.2" height="2" fill="#fff"/><text x="7" y="13.8" font-family="Liberation Sans" font-size="8" fill="#333" text-anchor="middle">31</text></svg><div style="position:absolute;left:972px;top:3px;width:1px;height:16px;background:#b8b8b8"></div><div style="position:absolute;left:980px;top:6px;white-space:nowrap;font-size:12px;line-height:16px;color:#b8aca4;font-weight:bold;letter-spacing:0">M</div><div style="position:absolute;left:1001px;top:6px;white-space:nowrap;font-size:12px;line-height:16px;color:#b8aca4;font-weight:bold;letter-spacing:-0.5px">M+</div><div style="position:absolute;left:1023px;top:6px;white-space:nowrap;font-size:12px;line-height:16px;color:#b8aca4;font-weight:bold;letter-spacing:-0.5px">M-</div><div style="position:absolute;left:1046px;top:3px;width:1px;height:16px;background:#b8b8b8"></div><svg style="position:absolute;left:1053px;top:5px" width="15" height="15" viewBox="0 0 15 15"><circle cx="6" cy="6" r="5.2" fill="#fff" stroke="#333" stroke-width="1.3"/><path d="M3.5 6 H8.5 M6 3.5 V8.5" stroke="#333" stroke-width="1.3"/><path d="M10 10 L14 14" stroke="#333" stroke-width="1.8"/></svg><svg style="position:absolute;left:1076px;top:5px" width="15" height="15" viewBox="0 0 15 15"><rect x="0.5" y="0.5" width="14" height="14" rx="1" fill="#fff" stroke="#5b8fd0"/><rect x="1" y="1" width="13" height="2" fill="#5b8fd0"/><path d="M7.5 2 V14" stroke="#555" stroke-width="1"/></svg><div style="position:absolute;left:1097px;top:3px;width:1px;height:16px;background:#b8b8b8"></div><svg style="position:absolute;left:1105px;top:4px" width="12" height="18" viewBox="0 0 12 18"><path d="M3.6 1.2 V4.6 L6 6 L8.4 4.6 V1.2 A4.8 4.8 0 0 1 8 9.6 V15.2 A2 2 0 0 1 4 15.2 V9.6 A4.8 4.8 0 0 1 3.6 1.2 Z" fill="#f6f6f6" stroke="#50545a" stroke-width="1.1" stroke-linejoin="round"/><circle cx="6" cy="14.6" r="0.9" fill="#b0b0b0"/></svg><div style="position:absolute;left:1125px;top:3px;width:1px;height:16px;background:#b8b8b8"></div><svg style="position:absolute;left:1131px;top:6px" width="11" height="12" viewBox="0 0 11 12"><circle cx="5.5" cy="3.5" r="3" fill="#555"/><path d="M0.5 11.5 Q0.5 6.5 5.5 6.5 Q10.5 6.5 10.5 11.5 Z" fill="#555"/></svg><div style="position:absolute;left:1145px;top:6px;white-space:nowrap;font-size:11px;line-height:14px;color:#222;font-weight:normal;letter-spacing:-0.3px">Андрей</div><div style="position:absolute;left:1186px;top:3px;width:1px;height:16px;background:#b8b8b8"></div><svg style="position:absolute;left:1191px;top:4px" width="18" height="18" viewBox="0 0 18 18"><defs><radialGradient id="ginb" cx="40%" cy="35%" r="70%"><stop offset="0" stop-color="#ffe6a0"/><stop offset="1" stop-color="#f0b040"/></radialGradient></defs><circle cx="9" cy="9" r="8" fill="url(#ginb)" stroke="#d09a30" stroke-width="0.8"/><text x="9" y="13.5" font-family="Liberation Serif" font-style="italic" font-weight="bold" font-size="12" fill="#6a5a40" text-anchor="middle">i</text></svg><svg style="position:absolute;left:1213px;top:14px" width="9" height="5" viewBox="0 0 9 5"><path d="M0.5 0.5 H8.5 L4.5 4.5 Z" fill="#555"/></svg><div style="position:absolute;left:1226px;top:3px;width:1px;height:16px;background:#b8b8b8"></div><div style="position:absolute;left:1236px;top:15px;width:7px;height:2px;background:#333"></div><div style="position:absolute;left:1256px;top:8px;width:11px;height:10px;border:1.5px solid #333;box-sizing:border-box;border-top-width:2px"></div><svg style="position:absolute;left:1278px;top:8px" width="11" height="10" viewBox="0 0 11 10"><path d="M1 1 L10 9 M10 1 L1 9" stroke="#333" stroke-width="2"/></svg><div style="position:absolute;left:5px;top:35px;width:185px;height:36px;background:#e6e6e6"></div><div style="position:absolute;left:190px;top:35px;width:1px;height:36px;background:#a8a8a8"></div><div style="position:absolute;left:191px;top:35px;width:175px;height:36px;background:#f0f0f0"></div><svg style="position:absolute;left:14px;top:44px" width="18" height="18" viewBox="0 0 18 18"><circle cx="2.8" cy="2.8" r="2.6" fill="#4d4d4d"/><circle cx="9.1" cy="2.8" r="2.6" fill="#4d4d4d"/><circle cx="15.4" cy="2.8" r="2.6" fill="#4d4d4d"/><circle cx="2.8" cy="9.1" r="2.6" fill="#4d4d4d"/><circle cx="9.1" cy="9.1" r="2.6" fill="#4d4d4d"/><circle cx="15.4" cy="9.1" r="2.6" fill="#4d4d4d"/><circle cx="2.8" cy="15.4" r="2.6" fill="#4d4d4d"/><circle cx="9.1" cy="15.4" r="2.6" fill="#4d4d4d"/><circle cx="15.4" cy="15.4" r="2.6" fill="#4d4d4d"/></svg><svg style="position:absolute;left:52px;top:45px" width="17" height="17" viewBox="0 0 17 17"><path d="M8.5 0.5 L10.6 6.2 L16.5 6.4 L11.8 10 L13.6 16 L8.5 12.5 L3.4 16 L5.2 10 L0.5 6.4 L6.4 6.2 Z" fill="#4d4d4d"/></svg><svg style="position:absolute;left:87px;top:44px" width="19" height="17" viewBox="0 0 19 17"><path d="M3.6 8.2 A7 7 0 1 1 6.1 13.6" fill="none" stroke="#4d4d4d" stroke-width="1.6"/><path d="M0.6 7.4 L6.4 7.4 L3.4 11.2 Z" fill="#4d4d4d"/><path d="M10.4 4.2 V8.6 L12.8 10.4" fill="none" stroke="#4d4d4d" stroke-width="1.6"/></svg><svg style="position:absolute;left:126px;top:44px" width="17" height="17" viewBox="0 0 17 17"><circle cx="6.6" cy="6.2" r="4.9" fill="none" stroke="#4d4d4d" stroke-width="1.7"/><path d="M10.2 9.8 L14.6 14.2" stroke="#4d4d4d" stroke-width="3"/></svg><svg style="position:absolute;left:163px;top:44px" width="17" height="18" viewBox="0 0 17 18"><path d="M8.5 1 Q12.8 2.5 12.8 7 V11.5 Q12.8 12.5 15 13 Q16 14 14.8 14.4 H2.2 Q1 14 2 13 Q4.2 12.5 4.2 11.5 V7 Q4.2 2.5 8.5 1 Z" fill="none" stroke="#4d4d4d" stroke-width="1.4" stroke-linejoin="round"/><path d="M6.5 14.8 L8.5 17 L10.5 14.8 Z" fill="#4d4d4d"/><path d="M7.2 1.6 L8.5 0 L9.8 1.6 Z" fill="#4d4d4d"/></svg><svg style="position:absolute;left:202px;top:46px" width="15" height="13" viewBox="0 0 15 13"><path d="M7.5 0.5 L15 7 H12.5 V12.5 H9 V9 H6 V12.5 H2.5 V7 H0 Z" fill="#4d4d4d"/></svg><div style="position:absolute;left:227px;top:45px;white-space:nowrap;font-size:13px;line-height:17px;color:#333;font-weight:normal;letter-spacing:-0.15px">Начальная страница</div><div style="position:absolute;left:366px;top:35px;width:1px;height:36px;background:#a8a8a8"></div><div style="position:absolute;left:367px;top:35px;width:445px;height:36px;background:#fff"></div><div style="position:absolute;left:377px;top:45px;white-space:nowrap;font-size:13px;line-height:17px;color:#333;font-weight:normal;letter-spacing:-0.111px">Ведомость амортизации ОС за Сентябрь 2018 г. ООО "ОптТоргСити"</div><svg style="position:absolute;left:797px;top:49px" width="8" height="8" viewBox="0 0 8 8"><path d="M0.8 0.8 L7.2 7.2 M7.2 0.8 L0.8 7.2" stroke="#4a4a4a" stroke-width="1.7"/></svg><div style="position:absolute;left:370px;top:67px;width:439px;height:2px;background:#00893a"></div><div style="position:absolute;left:812px;top:35px;width:1px;height:36px;background:#a8a8a8"></div><div style="position:absolute;left:813px;top:35px;width:482px;height:36px;background:#f0f0f0"></div><div style="position:absolute;left:5px;top:71px;width:1290px;height:1px;background:#a6a6a6"></div><div style="position:absolute;left:5px;top:72px;width:154px;height:458px;background:#fbe9a0"></div><div style="position:absolute;left:159px;top:72px;width:1px;height:458px;background:#c8aa30"></div><div style="position:absolute;left:21px;top:82px;white-space:nowrap;font-size:13px;line-height:17px;color:#333;font-weight:normal;">Главное</div><div style="position:absolute;left:21px;top:117px;white-space:nowrap;font-size:13px;line-height:17px;color:#333;font-weight:normal;">Руководителю</div><div style="position:absolute;left:21px;top:152px;white-space:nowrap;font-size:13px;line-height:17px;color:#333;font-weight:normal;">Банк и касса</div><div style="position:absolute;left:21px;top:187px;white-space:nowrap;font-size:13px;line-height:17px;color:#333;font-weight:normal;">Продажи</div><div style="position:absolute;left:21px;top:222px;white-space:nowrap;font-size:13px;line-height:17px;color:#333;font-weight:normal;">Покупки</div><div style="position:absolute;left:21px;top:257px;white-space:nowrap;font-size:13px;line-height:17px;color:#333;font-weight:normal;">Склад</div><div style="position:absolute;left:21px;top:292px;white-space:nowrap;font-size:13px;line-height:17px;color:#333;font-weight:normal;">Производство</div><div style="position:absolute;left:21px;top:327px;white-space:nowrap;font-size:13px;line-height:17px;color:#333;font-weight:normal;">ОС и НМА</div><div style="position:absolute;left:21px;top:362px;white-space:nowrap;font-size:13px;line-height:17px;color:#333;font-weight:normal;">Зарплата и кадры</div><div style="position:absolute;left:21px;top:397px;white-space:nowrap;font-size:13px;line-height:17px;color:#333;font-weight:normal;">Операции</div><div style="position:absolute;left:21px;top:432px;white-space:nowrap;font-size:13px;line-height:17px;color:#333;font-weight:normal;">Отчеты</div><div style="position:absolute;left:21px;top:467px;white-space:nowrap;font-size:13px;line-height:17px;color:#333;font-weight:normal;">Справочники</div><div style="position:absolute;left:21px;top:502px;white-space:nowrap;font-size:13px;line-height:17px;color:#333;font-weight:normal;">Администрирование</div><div style="position:absolute;left:172px;top:84px;width:74px;height:25px;background:linear-gradient(#fff,#ececec);border:1px solid #b9b9b9;border-radius:3px;box-sizing:border-box;box-shadow:0 1px 1px rgba(0,0,0,0.2)"></div><div style="position:absolute;left:209px;top:85px;width:1px;height:23px;background:#c8c8c8"></div><svg style="position:absolute;left:183px;top:91px" width="16" height="11" viewBox="0 0 16 11"><path d="M1 5.5 L7 0.3 V10.7 Z" fill="#4d4d4d"/><rect x="6" y="4.2" width="8.8" height="2.6" fill="#4d4d4d"/></svg><svg style="position:absolute;left:219px;top:91px" width="16" height="11" viewBox="0 0 16 11"><path d="M15 5.5 L9 0.3 V10.7 Z" fill="#a8a8a8"/><rect x="1.2" y="4.2" width="8.8" height="2.6" fill="#a8a8a8"/></svg><svg style="position:absolute;left:263px;top:85px" width="25" height="24" viewBox="0 0 25 24"><path d="M12.5 1 L15.4 9.2 L24 9.4 L17.2 14.7 L19.7 23 L12.5 18.1 L5.3 23 L7.8 14.7 L1 9.4 L9.6 9.2 Z" fill="none" stroke="#b4b4b4" stroke-width="1"/></svg><div style="position:absolute;left:304px;top:86px;white-space:nowrap;font-size:19px;line-height:23px;color:#111;font-weight:normal;">Ведомость амортизации ОС за Сентябрь 2018 г. ООО "ОптТоргСити"</div><svg style="position:absolute;left:1274px;top:89px" width="9" height="9" viewBox="0 0 9 9"><path d="M0.5 0.5 L8.5 8.5 M8.5 0.5 L0.5 8.5" stroke="#555" stroke-width="1.1"/></svg><div style="position:absolute;left:172px;top:130px;width:1104px;height:37px;background:#fbe8a0"></div><div style="position:absolute;left:177px;top:140px;white-space:nowrap;font-size:13px;line-height:17px;color:#4d4d4d;font-weight:normal;">Период:</div><div style="position:absolute;left:231px;top:136px;width:122px;height:25px;background:#fff;border:1px solid #a9a9a9;border-radius:3px;box-sizing:border-box;"></div><div style="position:absolute;left:331px;top:137px;width:1px;height:23px;background:#a9a9a9"></div><div style="position:absolute;left:236px;top:140px;white-space:nowrap;font-size:13px;line-height:17px;color:#333;font-weight:normal;letter-spacing:-0.15px">01.09.2018</div><svg style="position:absolute;left:337px;top:143px" width="9" height="10" viewBox="0 0 9 10"><rect x="0.6" y="2.6" width="7.8" height="6.8" rx="0.8" fill="#fff" stroke="#444" stroke-width="1.2"/><rect x="0" y="2" width="9" height="2.4" fill="#444"/><rect x="1.5" y="0.5" width="2" height="2" fill="#fff" stroke="#444" stroke-width="0.9"/><rect x="5.5" y="0.5" width="2" height="2" fill="#fff" stroke="#444" stroke-width="0.9"/><rect x="2" y="5" width="1" height="1" fill="#444"/><rect x="4" y="5" width="1" height="1" fill="#444"/><rect x="6" y="5" width="1" height="1" fill="#444"/><rect x="2" y="7" width="1" height="1" fill="#444"/><rect x="4" y="7" width="1" height="1" fill="#444"/><rect x="6" y="7" width="1" height="1" fill="#444"/></svg><div style="position:absolute;left:380px;top:136px;width:122px;height:25px;background:#fff;border:1px solid #a9a9a9;border-radius:3px;box-sizing:border-box;"></div><div style="position:absolute;left:480px;top:137px;width:1px;height:23px;background:#a9a9a9"></div><div style="position:absolute;left:385px;top:140px;white-space:nowrap;font-size:13px;line-height:17px;color:#333;font-weight:normal;letter-spacing:-0.15px">30.09.2018</div><svg style="position:absolute;left:486px;top:143px" width="9" height="10" viewBox="0 0 9 10"><rect x="0.6" y="2.6" width="7.8" height="6.8" rx="0.8" fill="#fff" stroke="#444" stroke-width="1.2"/><rect x="0" y="2" width="9" height="2.4" fill="#444"/><rect x="1.5" y="0.5" width="2" height="2" fill="#fff" stroke="#444" stroke-width="0.9"/><rect x="5.5" y="0.5" width="2" height="2" fill="#fff" stroke="#444" stroke-width="0.9"/><rect x="2" y="5" width="1" height="1" fill="#444"/><rect x="4" y="5" width="1" height="1" fill="#444"/><rect x="6" y="5" width="1" height="1" fill="#444"/><rect x="2" y="7" width="1" height="1" fill="#444"/><rect x="4" y="7" width="1" height="1" fill="#444"/><rect x="6" y="7" width="1" height="1" fill="#444"/></svg><div style="position:absolute;left:362px;top:140px;white-space:nowrap;font-size:13px;line-height:17px;color:#555;font-weight:normal;">–</div><div style="position:absolute;left:509px;top:132px;width:36px;height:33px;border:1px solid #f8c818;box-sizing:border-box"></div><div style="position:absolute;left:512px;top:135px;width:30px;height:26px;background:linear-gradient(#ffffff,#ececec);border:1px solid #b9b9b9;border-radius:3px;box-sizing:border-box;box-shadow:0 1px 1px rgba(0,0,0,0.25);text-align:center;font-size:13px;line-height:25px;color:#333;font-weight:normal;white-space:nowrap;"></div><svg style="position:absolute;left:521px;top:149px" width="12" height="5" viewBox="0 0 12 5"><circle cx="2.6" cy="2.5" r="0.85" fill="#333"/><circle cx="5.6" cy="2.5" r="0.85" fill="#333"/><circle cx="8.6" cy="2.5" r="0.85" fill="#333"/></svg><div style="position:absolute;left:552px;top:136px;width:410px;height:25px;background:#fff;border:1px solid #a9a9a9;border-radius:3px;box-sizing:border-box;"></div><div style="position:absolute;left:557px;top:140px;white-space:nowrap;font-size:13px;line-height:17px;color:#333;font-weight:normal;letter-spacing:-0.25px">ООО "ОптТоргСити"</div><div style="position:absolute;left:919px;top:137px;width:1px;height:23px;background:#a9a9a9"></div><div style="position:absolute;left:940px;top:137px;width:1px;height:23px;background:#a9a9a9"></div><svg style="position:absolute;left:926px;top:147px" width="7" height="4" viewBox="0 0 7 4"><path d="M0.8 0.3 H6.2 L3.5 3.2 Z" fill="#444"/></svg><svg style="position:absolute;left:947px;top:143px" width="11" height="10" viewBox="0 0 11 10"><rect x="3.6" y="1.1" width="5.6" height="5.3" fill="none" stroke="#333" stroke-width="1.1"/><path d="M2.6 4.2 H0.6 V9.2 H6.2 V7.4" fill="none" stroke="#333" stroke-width="1.1"/></svg><div style="position:absolute;left:172px;top:176px;width:128px;height:26px;background:linear-gradient(#ffec5a,#f6d300);border:1px solid #c8a800;border-radius:3px;box-sizing:border-box;box-shadow:0 1px 1px rgba(0,0,0,0.25);text-align:center;font-size:13.5px;line-height:25px;color:#3c3a30;font-weight:normal;white-space:nowrap;letter-spacing:0.3px;-webkit-text-stroke:0.4px #3c3a30">Сформировать</div><div style="position:absolute;left:309px;top:176px;width:146px;height:26px;background:linear-gradient(#ffffff,#ececec);border:1px solid #b9b9b9;border-radius:3px;box-sizing:border-box;box-shadow:0 1px 1px rgba(0,0,0,0.25);text-align:center;font-size:13px;line-height:25px;color:#333;font-weight:normal;white-space:nowrap;color:#444">Показать настройки</div><div style="position:absolute;left:464px;top:176px;width:70px;height:26px;background:linear-gradient(#ffffff,#ececec);border:1px solid #b9b9b9;border-radius:3px;box-sizing:border-box;box-shadow:0 1px 1px rgba(0,0,0,0.25);text-align:center;font-size:13px;line-height:25px;color:#333;font-weight:normal;white-space:nowrap;color:#444">Печать</div><div style="position:absolute;left:976px;top:180px;white-space:nowrap;font-size:19px;line-height:20px;color:#9a9a9a;font-weight:bold;font-family:'Liberation Serif',serif">Σ</div><div style="position:absolute;left:1001px;top:177px;width:131px;height:25px;background:#fff;border:1px solid #a9a9a9;border-radius:3px;box-sizing:border-box;border-color:#c8c8c8"></div><div style="position:absolute;left:828px;width:300px;top:181px;text-align:right;white-space:nowrap;font-size:13px;line-height:17px;color:#333;font-weight:normal;">0,00</div><div style="position:absolute;left:1215px;top:176px;width:61px;height:26px;background:linear-gradient(#ffffff,#ececec);border:1px solid #b9b9b9;border-radius:3px;box-sizing:border-box;box-shadow:0 1px 1px rgba(0,0,0,0.25);text-align:center;font-size:13px;line-height:25px;color:#333;font-weight:normal;white-space:nowrap;text-align:left;padding-left:13px;color:#444;font-size:13.5px">Еще</div><svg style="position:absolute;left:1264px;top:189px" width="6" height="4" viewBox="0 0 6 4"><path d="M0.3 0.2 H5.7 L3 3.2 Z" fill="#444"/></svg><div style="position:absolute;left:172px;top:212px;width:1104px;height:306px;background:#fff;border:1px solid #a0a0a0;box-sizing:border-box"></div><div style="position:absolute;left:175px;top:212.5px;white-space:nowrap;font-size:9.6px;line-height:12.5px;color:#111;font-weight:normal;letter-spacing:0.5px;-webkit-text-stroke:0.25px #111">ООО "ОптТоргСити"</div><div style="position:absolute;left:176px;top:226px;white-space:nowrap;font-size:11.6px;line-height:15px;color:#111;font-weight:normal;letter-spacing:0.38px;-webkit-text-stroke:0.45px #111">Ведомость амортизации ОС за Сентябрь 2018 г.</div><div style="position:absolute;left:342px;top:240px;width:105px;height:2px;background:#ff0000"></div><div style="position:absolute;left:172px;top:243px;width:1087px;height:52px;background:#d9e4cc"></div><div style="position:absolute;left:172px;top:319px;width:1087px;height:26px;background:#d9e4cc"></div><div style="position:absolute;left:172px;top:243px;width:1088px;height:1px;background:#a0a0a0"></div><div style="position:absolute;left:366px;top:256px;width:893px;height:1px;background:#a0a0a0"></div><div style="position:absolute;left:172px;top:295px;width:1088px;height:1px;background:#a0a0a0"></div><div style="position:absolute;left:330px;top:307px;width:929px;height:1px;background:#b7d1c6"></div><div style="position:absolute;left:172px;top:319px;width:1088px;height:1px;background:#a0a0a0"></div><div style="position:absolute;left:330px;top:332px;width:929px;height:1px;background:#a0a0a0"></div><div style="position:absolute;left:172px;top:345px;width:1088px;height:1px;background:#a0a0a0"></div><div style="position:absolute;left:330px;top:243px;width:1px;height:52px;background:#a0a0a0"></div><div style="position:absolute;left:330px;top:295px;width:1px;height:24px;background:#a0a0a0"></div><div style="position:absolute;left:330px;top:319px;width:1px;height:26px;background:#a0a0a0"></div><div style="position:absolute;left:366px;top:243px;width:1px;height:52px;background:#a0a0a0"></div><div style="position:absolute;left:366px;top:295px;width:1px;height:24px;background:#b7d1c6"></div><div style="position:absolute;left:366px;top:319px;width:1px;height:26px;background:#a0a0a0"></div><div style="position:absolute;left:456px;top:256px;width:1px;height:39px;background:#a0a0a0"></div><div style="position:absolute;left:456px;top:295px;width:1px;height:24px;background:#b7d1c6"></div><div style="position:absolute;left:456px;top:319px;width:1px;height:26px;background:#a0a0a0"></div><div style="position:absolute;left:545px;top:256px;width:1px;height:39px;background:#a0a0a0"></div><div style="position:absolute;left:545px;top:295px;width:1px;height:24px;background:#b7d1c6"></div><div style="position:absolute;left:545px;top:319px;width:1px;height:26px;background:#a0a0a0"></div><div style="position:absolute;left:634px;top:243px;width:1px;height:52px;background:#a0a0a0"></div><div style="position:absolute;left:634px;top:295px;width:1px;height:24px;background:#b7d1c6"></div><div style="position:absolute;left:634px;top:319px;width:1px;height:26px;background:#a0a0a0"></div><div style="position:absolute;left:723px;top:256px;width:1px;height:39px;background:#a0a0a0"></div><div style="position:absolute;left:723px;top:295px;width:1px;height:24px;background:#b7d1c6"></div><div style="position:absolute;left:723px;top:319px;width:1px;height:26px;background:#a0a0a0"></div><div style="position:absolute;left:812px;top:256px;width:1px;height:39px;background:#a0a0a0"></div><div style="position:absolute;left:812px;top:295px;width:1px;height:24px;background:#b7d1c6"></div><div style="position:absolute;left:812px;top:319px;width:1px;height:26px;background:#a0a0a0"></div><div style="position:absolute;left:902px;top:256px;width:1px;height:39px;background:#a0a0a0"></div><div style="position:absolute;left:902px;top:295px;width:1px;height:24px;background:#b7d1c6"></div><div style="position:absolute;left:902px;top:319px;width:1px;height:26px;background:#a0a0a0"></div><div style="position:absolute;left:991px;top:243px;width:1px;height:52px;background:#a0a0a0"></div><div style="position:absolute;left:991px;top:295px;width:1px;height:24px;background:#b7d1c6"></div><div style="position:absolute;left:991px;top:319px;width:1px;height:26px;background:#a0a0a0"></div><div style="position:absolute;left:1080px;top:256px;width:1px;height:39px;background:#a0a0a0"></div><div style="position:absolute;left:1080px;top:295px;width:1px;height:24px;background:#b7d1c6"></div><div style="position:absolute;left:1080px;top:319px;width:1px;height:26px;background:#a0a0a0"></div><div style="position:absolute;left:1170px;top:256px;width:1px;height:39px;background:#a0a0a0"></div><div style="position:absolute;left:1170px;top:295px;width:1px;height:24px;background:#b7d1c6"></div><div style="position:absolute;left:1170px;top:319px;width:1px;height:26px;background:#a0a0a0"></div><div style="position:absolute;left:1259px;top:243px;width:1px;height:52px;background:#a0a0a0"></div><div style="position:absolute;left:1259px;top:295px;width:1px;height:24px;background:#a0a0a0"></div><div style="position:absolute;left:1259px;top:319px;width:1px;height:26px;background:#a0a0a0"></div><div style="position:absolute;left:175.5px;top:244px;white-space:nowrap;font-size:9.6px;line-height:13px;color:#0e362c;font-weight:normal;letter-spacing:0.55px">Основное средство,</div><div style="position:absolute;left:175.5px;top:257px;white-space:nowrap;font-size:9.6px;line-height:13px;color:#0e362c;font-weight:normal;letter-spacing:0.55px">Инвентарный номер, Дата</div><div style="position:absolute;left:175.5px;top:270px;white-space:nowrap;font-size:9.6px;line-height:13px;color:#0e362c;font-weight:normal;letter-spacing:0.55px">принятия к учету</div><div style="position:absolute;left:333.5px;top:244px;white-space:nowrap;font-size:9.6px;line-height:13px;color:#0e362c;font-weight:normal;letter-spacing:0.55px">Показ</div><div style="position:absolute;left:333.5px;top:257px;white-space:nowrap;font-size:9.6px;line-height:13px;color:#0e362c;font-weight:normal;letter-spacing:0.55px">атели</div><div style="position:absolute;left:369.5px;top:244px;white-space:nowrap;font-size:9.6px;line-height:13px;color:#0e362c;font-weight:normal;letter-spacing:0.55px">На начало периода</div><div style="position:absolute;left:637.5px;top:244px;white-space:nowrap;font-size:9.6px;line-height:13px;color:#0e362c;font-weight:normal;letter-spacing:0.55px">За период</div><div style="position:absolute;left:994.5px;top:244px;white-space:nowrap;font-size:9.6px;line-height:13px;color:#0e362c;font-weight:normal;letter-spacing:0.55px">На конец периода</div><div style="position:absolute;left:369.5px;top:257px;white-space:nowrap;font-size:9.6px;line-height:13px;color:#0e362c;font-weight:normal;letter-spacing:0.55px">Стоимость</div><div style="position:absolute;left:459.5px;top:257px;white-space:nowrap;font-size:9.6px;line-height:13px;color:#0e362c;font-weight:normal;letter-spacing:0.55px">Амортизация</div><div style="position:absolute;left:459.5px;top:270px;white-space:nowrap;font-size:9.6px;line-height:13px;color:#0e362c;font-weight:normal;letter-spacing:0.55px">(износ)</div><div style="position:absolute;left:548.5px;top:257px;white-space:nowrap;font-size:9.6px;line-height:13px;color:#0e362c;font-weight:normal;letter-spacing:0.55px">Остаточная</div><div style="position:absolute;left:548.5px;top:270px;white-space:nowrap;font-size:9.6px;line-height:13px;color:#0e362c;font-weight:normal;letter-spacing:0.55px">стоимость</div><div style="position:absolute;left:638.5px;top:257px;white-space:nowrap;font-size:9.6px;line-height:13px;color:#0e362c;font-weight:normal;letter-spacing:0.55px">Увеличение</div><div style="position:absolute;left:638.5px;top:270px;white-space:nowrap;font-size:9.6px;line-height:13px;color:#0e362c;font-weight:normal;letter-spacing:0.55px">стоимости</div><div style="position:absolute;left:727.5px;top:257px;white-space:nowrap;font-size:9.6px;line-height:13px;color:#0e362c;font-weight:normal;letter-spacing:0.55px">Начисление</div><div style="position:absolute;left:727.5px;top:270px;white-space:nowrap;font-size:9.6px;line-height:13px;color:#0e362c;font-weight:normal;letter-spacing:0.55px">амортизации</div><div style="position:absolute;left:727.5px;top:283px;white-space:nowrap;font-size:9.6px;line-height:13px;color:#0e362c;font-weight:normal;letter-spacing:0.55px">(износа)</div><div style="position:absolute;left:816.5px;top:257px;white-space:nowrap;font-size:9.6px;line-height:13px;color:#0e362c;font-weight:normal;letter-spacing:0.55px">Уменьшение</div><div style="position:absolute;left:816.5px;top:270px;white-space:nowrap;font-size:9.6px;line-height:13px;color:#0e362c;font-weight:normal;letter-spacing:0.55px">стоимости</div><div style="position:absolute;left:905.5px;top:257px;white-space:nowrap;font-size:9.6px;line-height:13px;color:#0e362c;font-weight:normal;letter-spacing:0.55px">Списание</div><div style="position:absolute;left:905.5px;top:270px;white-space:nowrap;font-size:9.6px;line-height:13px;color:#0e362c;font-weight:normal;letter-spacing:0.55px">амортизации</div><div style="position:absolute;left:905.5px;top:283px;white-space:nowrap;font-size:9.6px;line-height:13px;color:#0e362c;font-weight:normal;letter-spacing:0.55px">(износа)</div><div style="position:absolute;left:994.5px;top:257px;white-space:nowrap;font-size:9.6px;line-height:13px;color:#0e362c;font-weight:normal;letter-spacing:0.55px">Стоимость</div><div style="position:absolute;left:1084.5px;top:257px;white-space:nowrap;font-size:9.6px;line-height:13px;color:#0e362c;font-weight:normal;letter-spacing:0.55px">Амортизация</div><div style="position:absolute;left:1084.5px;top:270px;white-space:nowrap;font-size:9.6px;line-height:13px;color:#0e362c;font-weight:normal;letter-spacing:0.55px">(износ)</div><div style="position:absolute;left:1173.5px;top:257px;white-space:nowrap;font-size:9.6px;line-height:13px;color:#0e362c;font-weight:normal;letter-spacing:0.55px">Остаточная</div><div style="position:absolute;left:1173.5px;top:270px;white-space:nowrap;font-size:9.6px;line-height:13px;color:#0e362c;font-weight:normal;letter-spacing:0.55px">стоимость</div><div style="position:absolute;left:175px;top:296px;white-space:nowrap;font-size:9.3px;line-height:12px;color:#222;font-weight:normal;">Ноутбук Xiaomi Mi Gaming Laptop,</div><div style="position:absolute;left:175px;top:308px;white-space:nowrap;font-size:9.3px;line-height:12px;color:#222;font-weight:normal;">00-000025, 16.07.2018</div><div style="position:absolute;left:333px;top:296px;white-space:nowrap;font-size:9.3px;line-height:12px;color:#222;font-weight:normal;">БУ</div><div style="position:absolute;left:333px;top:308px;white-space:nowrap;font-size:9.3px;line-height:12px;color:#222;font-weight:normal;">НУ</div><div style="position:absolute;left:175px;top:320px;white-space:nowrap;font-size:9.6px;line-height:13px;color:#102a24;font-weight:bold;letter-spacing:0.15px;text-rendering:geometricPrecision">Итого</div><div style="position:absolute;left:333px;top:320px;white-space:nowrap;font-size:9.6px;line-height:13px;color:#102a24;font-weight:bold;letter-spacing:0.3px;text-rendering:geometricPrecision">БУ</div><div style="position:absolute;left:333px;top:333px;white-space:nowrap;font-size:9.6px;line-height:13px;color:#102a24;font-weight:bold;letter-spacing:0.3px;text-rendering:geometricPrecision">НУ</div><div style="position:absolute;left:153.7px;width:300px;top:296px;text-align:right;white-space:nowrap;font-size:9.5px;line-height:12px;color:#111;font-weight:normal;letter-spacing:-0.3px;-webkit-text-stroke:0.1px #111">120 000,00</div><div style="position:absolute;left:153.7px;width:300px;top:308px;text-align:right;white-space:nowrap;font-size:9.5px;line-height:12px;color:#111;font-weight:normal;letter-spacing:-0.3px;-webkit-text-stroke:0.1px #111">120 000,00</div><div style="position:absolute;left:153.5px;width:300px;top:320px;text-align:right;white-space:nowrap;font-size:10px;line-height:13px;color:#102a24;font-weight:bold;letter-spacing:0.2px">120 000,00</div><div style="position:absolute;left:153.5px;width:300px;top:333px;text-align:right;white-space:nowrap;font-size:10px;line-height:13px;color:#102a24;font-weight:bold;letter-spacing:0.2px">120 000,00</div><div style="position:absolute;left:242.70000000000005px;width:300px;top:296px;text-align:right;white-space:nowrap;font-size:9.5px;line-height:12px;color:#111;font-weight:normal;letter-spacing:-0.3px;-webkit-text-stroke:0.1px #111">3 000,00</div><div style="position:absolute;left:242.70000000000005px;width:300px;top:308px;text-align:right;white-space:nowrap;font-size:9.5px;line-height:12px;color:#111;font-weight:normal;letter-spacing:-0.3px;-webkit-text-stroke:0.1px #111">3 000,00</div><div style="position:absolute;left:242.5px;width:300px;top:320px;text-align:right;white-space:nowrap;font-size:10px;line-height:13px;color:#102a24;font-weight:bold;letter-spacing:0.2px">3 000,00</div><div style="position:absolute;left:242.5px;width:300px;top:333px;text-align:right;white-space:nowrap;font-size:10px;line-height:13px;color:#102a24;font-weight:bold;letter-spacing:0.2px">3 000,00</div><div style="position:absolute;left:331.70000000000005px;width:300px;top:296px;text-align:right;white-space:nowrap;font-size:9.5px;line-height:12px;color:#111;font-weight:normal;letter-spacing:-0.3px;-webkit-text-stroke:0.1px #111">117 000,00</div><div style="position:absolute;left:331.70000000000005px;width:300px;top:308px;text-align:right;white-space:nowrap;font-size:9.5px;line-height:12px;color:#111;font-weight:normal;letter-spacing:-0.3px;-webkit-text-stroke:0.1px #111">117 000,00</div><div style="position:absolute;left:331.5px;width:300px;top:320px;text-align:right;white-space:nowrap;font-size:10px;line-height:13px;color:#102a24;font-weight:bold;letter-spacing:0.2px">117 000,00</div><div style="position:absolute;left:331.5px;width:300px;top:333px;text-align:right;white-space:nowrap;font-size:10px;line-height:13px;color:#102a24;font-weight:bold;letter-spacing:0.2px">117 000,00</div><div style="position:absolute;left:509.70000000000005px;width:300px;top:296px;text-align:right;white-space:nowrap;font-size:9.5px;line-height:12px;color:#111;font-weight:normal;letter-spacing:-0.3px;-webkit-text-stroke:0.1px #111">2 666,67</div><div style="position:absolute;left:509.70000000000005px;width:300px;top:308px;text-align:right;white-space:nowrap;font-size:9.5px;line-height:12px;color:#111;font-weight:normal;letter-spacing:-0.3px;-webkit-text-stroke:0.1px #111">2 666,67</div><div style="position:absolute;left:509.5px;width:300px;top:320px;text-align:right;white-space:nowrap;font-size:10px;line-height:13px;color:#102a24;font-weight:bold;letter-spacing:0.2px">2 666,67</div><div style="position:absolute;left:509.5px;width:300px;top:333px;text-align:right;white-space:nowrap;font-size:10px;line-height:13px;color:#102a24;font-weight:bold;letter-spacing:0.2px">2 666,67</div><div style="position:absolute;left:777.7px;width:300px;top:296px;text-align:right;white-space:nowrap;font-size:9.5px;line-height:12px;color:#111;font-weight:normal;letter-spacing:-0.3px;-webkit-text-stroke:0.1px #111">120 000,00</div><div style="position:absolute;left:777.7px;width:300px;top:308px;text-align:right;white-space:nowrap;font-size:9.5px;line-height:12px;color:#111;font-weight:normal;letter-spacing:-0.3px;-webkit-text-stroke:0.1px #111">120 000,00</div><div style="position:absolute;left:777.5px;width:300px;top:320px;text-align:right;white-space:nowrap;font-size:10px;line-height:13px;color:#102a24;font-weight:bold;letter-spacing:0.2px">120 000,00</div><div style="position:absolute;left:777.5px;width:300px;top:333px;text-align:right;white-space:nowrap;font-size:10px;line-height:13px;color:#102a24;font-weight:bold;letter-spacing:0.2px">120 000,00</div><div style="position:absolute;left:867.7px;width:300px;top:296px;text-align:right;white-space:nowrap;font-size:9.5px;line-height:12px;color:#111;font-weight:normal;letter-spacing:-0.3px;-webkit-text-stroke:0.1px #111">5 666,67</div><div style="position:absolute;left:867.7px;width:300px;top:308px;text-align:right;white-space:nowrap;font-size:9.5px;line-height:12px;color:#111;font-weight:normal;letter-spacing:-0.3px;-webkit-text-stroke:0.1px #111">5 666,67</div><div style="position:absolute;left:867.5px;width:300px;top:320px;text-align:right;white-space:nowrap;font-size:10px;line-height:13px;color:#102a24;font-weight:bold;letter-spacing:0.2px">5 666,67</div><div style="position:absolute;left:867.5px;width:300px;top:333px;text-align:right;white-space:nowrap;font-size:10px;line-height:13px;color:#102a24;font-weight:bold;letter-spacing:0.2px">5 666,67</div><div style="position:absolute;left:956.7px;width:300px;top:296px;text-align:right;white-space:nowrap;font-size:9.5px;line-height:12px;color:#111;font-weight:normal;letter-spacing:-0.3px;-webkit-text-stroke:0.1px #111">114 333,33</div><div style="position:absolute;left:956.7px;width:300px;top:308px;text-align:right;white-space:nowrap;font-size:9.5px;line-height:12px;color:#111;font-weight:normal;letter-spacing:-0.3px;-webkit-text-stroke:0.1px #111">114 333,33</div><div style="position:absolute;left:956.5px;width:300px;top:320px;text-align:right;white-space:nowrap;font-size:10px;line-height:13px;color:#102a24;font-weight:bold;letter-spacing:0.2px">114 333,33</div><div style="position:absolute;left:956.5px;width:300px;top:333px;text-align:right;white-space:nowrap;font-size:10px;line-height:13px;color:#102a24;font-weight:bold;letter-spacing:0.2px">114 333,33</div><div style="position:absolute;left:723px;top:256px;width:91px;height:90px;border:2px solid #ff0000;box-sizing:border-box"></div><div style="position:absolute;left:175px;top:369px;white-space:nowrap;font-size:7.8px;line-height:10px;color:#333;font-weight:normal;letter-spacing:-0.1px">Ответственный:</div><div style="position:absolute;left:257px;top:378px;width:177px;height:1px;background:#333"></div><div style="position:absolute;left:446px;top:378px;width:81px;height:1px;background:#333"></div><div style="position:absolute;left:539px;top:378px;width:150px;height:1px;background:#333"></div><div style="position:absolute;left:145px;width:400px;top:380px;text-align:center;white-space:nowrap;font-size:7.8px;line-height:10px;color:#333;letter-spacing:-0.15px">(должность)</div><div style="position:absolute;left:286px;width:400px;top:380px;text-align:center;white-space:nowrap;font-size:7.8px;line-height:10px;color:#333;letter-spacing:-0.15px">(подпись)</div><div style="position:absolute;left:414px;width:400px;top:380px;text-align:center;white-space:nowrap;font-size:7.8px;line-height:10px;color:#333;letter-spacing:-0.15px">(расшифровка подписи)</div><svg style="position:absolute;left:1264px;top:221px" width="8" height="5" viewBox="0 0 8 5"><path d="M0.5 4.5 H7.5 L4 0.5 Z" fill="#c4c4c4"/></svg><div style="position:absolute;left:1264px;top:236px;width:8px;height:244px;background:#d4d4d4;border-radius:4px"></div><div style="position:absolute;left:1264px;top:236px;width:8px;height:128px;background:#9a9a9a;border-radius:4px"></div><svg style="position:absolute;left:1264px;top:490px" width="8" height="5" viewBox="0 0 8 5"><path d="M0.5 0.5 H7.5 L4 4.5 Z" fill="#555"/></svg><svg style="position:absolute;left:181px;top:506px" width="5" height="8" viewBox="0 0 5 8"><path d="M4.5 0.5 V7.5 L0.5 4 Z" fill="#c4c4c4"/></svg><div style="position:absolute;left:196px;top:506px;width:1042px;height:8px;background:#d4d4d4;border-radius:4px"></div><div style="position:absolute;left:196px;top:506px;width:953px;height:8px;background:#9a9a9a;border-radius:4px"></div><svg style="position:absolute;left:1248px;top:506px" width="5" height="8" viewBox="0 0 5 8"><path d="M0.5 0.5 V7.5 L4.5 4 Z" fill="#555"/></svg></div>
</body></html>
